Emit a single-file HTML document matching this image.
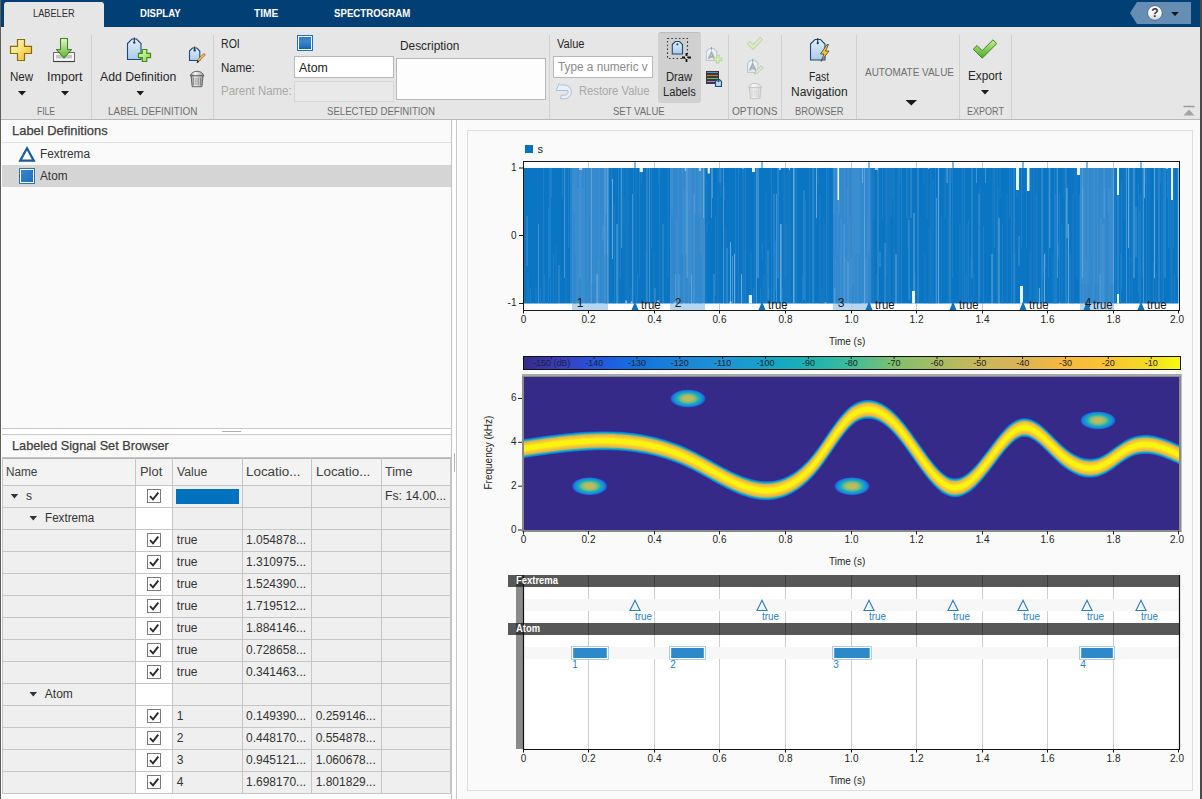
<!DOCTYPE html><html><head><meta charset="utf-8"><style>
*{box-sizing:border-box;margin:0;padding:0}
html,body{width:1202px;height:799px;overflow:hidden;background:#fafafa;font-family:"Liberation Sans",sans-serif;position:relative}
.a{position:absolute}
.t{position:absolute;white-space:nowrap;line-height:1}
svg{position:absolute;overflow:visible}
</style></head><body><div class="a" style="left:0px;top:0px;width:1202px;height:27px;background:#023f74"></div>
<div class="a" style="left:4px;top:2px;width:100px;height:26px;background:#e6e6e6;border-radius:3px 3px 0 0"></div>
<div class="t" style="left:33.30px;top:7.99px;font-size:11px;color:#2e2e2e;transform:scaleX(0.8393);transform-origin:0 0;">LABELER</div>
<div class="t" style="left:139.80px;top:7.99px;font-size:11px;color:#ffffff;font-weight:bold;transform:scaleX(0.8699);transform-origin:0 0;">DISPLAY</div>
<div class="t" style="left:254.00px;top:7.99px;font-size:11px;color:#ffffff;font-weight:bold;transform:scaleX(0.9208);transform-origin:0 0;">TIME</div>
<div class="t" style="left:333.80px;top:7.99px;font-size:11px;color:#ffffff;font-weight:bold;transform:scaleX(0.8781);transform-origin:0 0;">SPECTROGRAM</div>
<svg style="left:1130px;top:2px" width="62" height="23"><defs><linearGradient id="hq" x1="0" y1="0" x2="0" y2="1"><stop offset="0" stop-color="#ffffff"/><stop offset="0.6" stop-color="#f4f4f4"/><stop offset="1" stop-color="#c8ccd2"/></linearGradient></defs><path d="M7 0H61V22H7L0 11Z" fill="#668db3"/><circle cx="24.9" cy="11" r="7.3" fill="url(#hq)" stroke="#3a4a5a" stroke-width="0.6"/><text x="24.9" y="15.3" font-size="12" font-weight="bold" text-anchor="middle" fill="#2e3a48" font-family="Liberation Sans">?</text><path d="M41.2 9.9h7.6l-3.8 4.1z" fill="#111"/></svg>
<div class="a" style="left:0px;top:27px;width:1202px;height:93px;background:#e6e6e6;border-bottom:1px solid #b9b9b9"></div>
<div class="a" style="left:91px;top:35px;width:1px;height:84px;background:#d0d0d0"></div>
<div class="a" style="left:213px;top:35px;width:1px;height:84px;background:#d0d0d0"></div>
<div class="a" style="left:549px;top:35px;width:1px;height:84px;background:#d0d0d0"></div>
<div class="a" style="left:728px;top:35px;width:1px;height:84px;background:#d0d0d0"></div>
<div class="a" style="left:781px;top:35px;width:1px;height:84px;background:#d0d0d0"></div>
<div class="a" style="left:856px;top:35px;width:1px;height:84px;background:#d0d0d0"></div>
<div class="a" style="left:959px;top:35px;width:1px;height:84px;background:#d0d0d0"></div>
<div class="a" style="left:1011px;top:35px;width:1px;height:84px;background:#d0d0d0"></div>
<div class="t" style="left:37.00px;top:106.49px;font-size:11px;color:#6e6e6e;transform:scaleX(0.7742);transform-origin:0 0;">FILE</div>
<div class="t" style="left:107.80px;top:106.49px;font-size:11px;color:#6e6e6e;transform:scaleX(0.9015);transform-origin:0 0;">LABEL DEFINITION</div>
<div class="t" style="left:327.30px;top:106.49px;font-size:11px;color:#6e6e6e;transform:scaleX(0.8745);transform-origin:0 0;">SELECTED DEFINITION</div>
<div class="t" style="left:613.30px;top:106.49px;font-size:11px;color:#6e6e6e;transform:scaleX(0.8682);transform-origin:0 0;">SET VALUE</div>
<div class="t" style="left:732.00px;top:106.49px;font-size:11px;color:#6e6e6e;transform:scaleX(0.9186);transform-origin:0 0;">OPTIONS</div>
<div class="t" style="left:794.50px;top:106.49px;font-size:11px;color:#6e6e6e;transform:scaleX(0.8532);transform-origin:0 0;">BROWSER</div>
<div class="t" style="left:966.60px;top:106.49px;font-size:11px;color:#6e6e6e;transform:scaleX(0.8191);transform-origin:0 0;">EXPORT</div>
<div class="t" style="left:9.80px;top:70.54px;font-size:12px;color:#262626;transform:scaleX(0.9660);transform-origin:0 0;">New</div>
<div class="t" style="left:46.50px;top:70.54px;font-size:12px;color:#262626;transform:scaleX(1.0441);transform-origin:0 0;">Import</div>
<div class="t" style="left:100.10px;top:70.54px;font-size:12px;color:#262626;transform:scaleX(1.0227);transform-origin:0 0;">Add Definition</div>
<div class="t" style="left:220.60px;top:37.74px;font-size:12px;color:#262626;transform:scaleX(0.8815);transform-origin:0 0;">ROI</div>
<div class="t" style="left:220.60px;top:61.74px;font-size:12px;color:#262626;transform:scaleX(0.9563);transform-origin:0 0;">Name:</div>
<div class="t" style="left:220.60px;top:85.44px;font-size:12px;color:#a8a8a8;transform:scaleX(0.9545);transform-origin:0 0;">Parent Name:</div>
<div class="t" style="left:399.90px;top:39.94px;font-size:12px;color:#262626;transform:scaleX(0.9895);transform-origin:0 0;">Description</div>
<div class="t" style="left:556.60px;top:37.64px;font-size:12px;color:#262626;transform:scaleX(0.9229);transform-origin:0 0;">Value</div>
<div class="t" style="left:578.60px;top:85.14px;font-size:12px;color:#a8a8a8;transform:scaleX(0.9369);transform-origin:0 0;">Restore Value</div>
<div class="t" style="left:809.00px;top:70.64px;font-size:12px;color:#262626;transform:scaleX(0.8573);transform-origin:0 0;">Fast</div>
<div class="t" style="left:790.80px;top:86.44px;font-size:12px;color:#262626;transform:scaleX(0.9999);transform-origin:0 0;">Navigation</div>
<div class="t" style="left:865.00px;top:67.39px;font-size:11px;color:#6e6e6e;transform:scaleX(0.9040);transform-origin:0 0;">AUTOMATE VALUE</div>
<div class="t" style="left:967.80px;top:70.24px;font-size:12px;color:#262626;transform:scaleX(0.9806);transform-origin:0 0;">Export</div>
<svg style="left:0;top:0" width="1" height="1"><path d="M18 91H26L22.0 95.5Z" fill="#1a1a1a"/></svg>
<svg style="left:0;top:0" width="1" height="1"><path d="M61 91H69L65.0 95.5Z" fill="#1a1a1a"/></svg>
<svg style="left:0;top:0" width="1" height="1"><path d="M136.5 91H144L140.25 95.5Z" fill="#1a1a1a"/></svg>
<svg style="left:0;top:0" width="1" height="1"><path d="M981 90H989L985.0 94.5Z" fill="#1a1a1a"/></svg>
<svg style="left:0;top:0" width="1" height="1"><path d="M905.5 100H917L911.25 105.5Z" fill="#1a1a1a"/></svg>
<div class="a" style="left:296.9px;top:34.8px;width:16.2px;height:16.2px;background:#fff;border:1.3px solid #1f72c2"></div>
<div class="a" style="left:299.2px;top:37.1px;width:11.6px;height:11.6px;background:linear-gradient(180deg,#2a7cc6,#3c88ca 35%,#2a78c2 70%,#0d62b8)"></div>
<div class="a" style="left:294px;top:56px;width:100px;height:22px;background:#fff;border:1px solid #b8b8b8"></div>
<div class="t" style="left:299.00px;top:61.74px;font-size:12px;color:#222;transform:scaleX(1.0286);transform-origin:0 0;">Atom</div>
<div class="a" style="left:294px;top:80.5px;width:100px;height:21px;background:#e9e9e9;border:1px solid #d6d6d6"></div>
<div class="a" style="left:396px;top:58px;width:150px;height:42px;background:#fdfdfd;border:1px solid #b8b8b8"></div>
<div class="a" style="left:553px;top:56px;width:100px;height:22px;background:#fff;border:1px solid #b8b8b8"></div>
<div class="t" style="left:558.30px;top:61.44px;font-size:12px;color:#8a8a8a;transform:scaleX(0.9818);transform-origin:0 0;">Type a numeric v</div>
<div class="a" style="left:657.5px;top:31.7px;width:43.3px;height:71px;background:#d0d0d0;border-top:1px solid #bdbdbd;border-radius:3px"></div>
<div class="t" style="left:666.30px;top:70.64px;font-size:12px;color:#262626;transform:scaleX(0.9352);transform-origin:0 0;">Draw</div>
<div class="t" style="left:662.80px;top:86.44px;font-size:12px;color:#262626;transform:scaleX(0.9276);transform-origin:0 0;">Labels</div>
<svg style="left:0;top:0" width="1202" height="120" viewBox="0 0 1202 120"><defs>
<linearGradient id="plg" x1="0" y1="0" x2="1" y2="1"><stop offset="0" stop-color="#fffbd8"/><stop offset="0.5" stop-color="#f8e070"/><stop offset="1" stop-color="#e8b820"/></linearGradient>
<linearGradient id="grg" x1="0" y1="0" x2="0" y2="1"><stop offset="0" stop-color="#e6f5cf"/><stop offset="1" stop-color="#5fb52e"/></linearGradient>
<linearGradient id="gpg" x1="0" y1="0" x2="1" y2="1"><stop offset="0" stop-color="#e8fbc0"/><stop offset="1" stop-color="#8fd040"/></linearGradient>
<linearGradient id="tagg" x1="0" y1="0" x2="0" y2="1"><stop offset="0" stop-color="#e2eef8"/><stop offset="1" stop-color="#a9cbe8"/></linearGradient>
<linearGradient id="tagd" x1="0" y1="0" x2="0" y2="1"><stop offset="0" stop-color="#eef3f7"/><stop offset="1" stop-color="#dfe8f0"/></linearGradient>
<linearGradient id="trg" x1="0" y1="0" x2="1" y2="0"><stop offset="0" stop-color="#8c8c8c"/><stop offset="0.35" stop-color="#f8f8f8"/><stop offset="1" stop-color="#9a9a9a"/></linearGradient>
<linearGradient id="trgd" x1="0" y1="0" x2="1" y2="0"><stop offset="0" stop-color="#d8d8d8"/><stop offset="0.35" stop-color="#f6f6f6"/><stop offset="1" stop-color="#d8d8d8"/></linearGradient>
<linearGradient id="ckg" x1="0" y1="0" x2="0" y2="1"><stop offset="0" stop-color="#c8ee90"/><stop offset="1" stop-color="#4fa82a"/></linearGradient>
</defs><path d="M17.5 39.5H24.5V46.3H31.5V53.5H24.5V60.5H17.5V53.5H10.5V46.3H17.5Z" fill="url(#plg)" stroke="#8c6a12" stroke-width="1.2" stroke-linejoin="miter"/><rect x="53.5" y="52.5" width="21" height="9" fill="#fafafa" stroke="#6a6a6a" stroke-width="1"/><rect x="56" y="55" width="16" height="3.5" fill="#c4c4c4"/><path d="M53.5 61.5H74.5" stroke="#444" stroke-width="1.2"/><path d="M60.5 38.5H67.5V49.5H71.5L64 58L56.5 49.5H60.5Z" fill="url(#grg)" stroke="#3a8a20" stroke-width="1.1" stroke-linejoin="round"/><path d="M127.5 43.5L132.0 39H136.5L141 43.5V59.5H127.5Z" fill="url(#tagg)" stroke="#1e4a7a" stroke-width="1.1" stroke-linejoin="miter"/><circle cx="134.25" cy="42.6" r="1.2" fill="#1e4a7a"/><path d="M134.25 37.5V42.6" stroke="#222" stroke-width="1"/><path d="M142.3 49.5H146.8V53.3H150.5V57.6H146.8V61.5H142.3V57.6H138.5V53.3H142.3Z" fill="url(#gpg)" stroke="#3e8e1e" stroke-width="1.2" stroke-linejoin="miter"/><path d="M189.5 51L192.5 48H196.8L199.8 51V60.5H189.5Z" fill="url(#tagg)" stroke="#1e4a7a" stroke-width="1.1" stroke-linejoin="miter"/><circle cx="194.65" cy="50.4" r="1.2" fill="#1e4a7a"/><path d="M194.65 46.5V50.4" stroke="#222" stroke-width="1"/><path d="M197 62.5L198.2 59L203.5 53.8L205 55.3L199.7 60.5Z" fill="#f0c040" stroke="#6a5020" stroke-width="0.6"/><path d="M203.5 53.8L204.4 52.9L205.9 54.4L205 55.3Z" fill="#e870a0"/><path d="M196.6 63L197.5 60.3L199.3 62Z" fill="#222"/><path d="M190.2 75.8Q191.905 71.3 197.05 71.3Q202.195 71.3 203.9 75.8Z" fill="url(#trg)" stroke="#5a5a5a" stroke-width="0.9"/><path d="M191.0 75.8L192.2 86.7H201.9L203.1 75.8Z" fill="url(#trg)" stroke="#5a5a5a" stroke-width="0.9"/><path d="M193.7 77.6V85.2" stroke="#5a5a5a" stroke-width="0.8" opacity="0.8"/><path d="M195.93333333333334 77.6V85.2" stroke="#5a5a5a" stroke-width="0.8" opacity="0.8"/><path d="M198.16666666666666 77.6V85.2" stroke="#5a5a5a" stroke-width="0.8" opacity="0.8"/><path d="M200.4 77.6V85.2" stroke="#5a5a5a" stroke-width="0.8" opacity="0.8"/><path d="M556.2 90.5L559 83.8L560.6 85H564.5A6.9 6.9 0 0 1 564.5 98.8H560.5L561.2 95.3H564.5A3.6 3.6 0 0 0 567.9 90.5Z" fill="#e8f0f8" stroke="#a6bcd2" stroke-width="0.9" stroke-linejoin="round"/><rect x="667.5" y="38.5" width="20" height="20" fill="none" stroke="#3a3a3a" stroke-width="1.1" stroke-dasharray="1.6 2.2"/><path d="M672.3 44.5L675.3 41.5H679.5L682.5 44.5V54H672.3Z" fill="url(#tagg)" stroke="#1e4a7a" stroke-width="1.1" stroke-linejoin="miter"/><circle cx="677.4" cy="44.3" r="1.1" fill="#1e4a7a"/><path d="M686.5 53V56M686.5 59V62M682 57.5H685M688 57.5H691" stroke="#111" stroke-width="1.8"/><path d="M706.3 51.5L709.3 48.5H713.8L716.8 51.5V60.5H706.3Z" fill="url(#tagd)" stroke="#b7c9da" stroke-width="1.1" stroke-linejoin="miter"/><path d="M711.5 47V50" stroke="#a0a0a0" stroke-width="1"/><path d="M708.575 59L711.5 52.5L714.425 59M709.745 56.725H713.255" fill="none" stroke="#adadad" stroke-width="1.8"/><path d="M716.6 55.3H719.2V58H721.8V60.6H719.2V63H716.6V60.6H714V58H716.6Z" fill="#d5efb5" stroke="#bcd8a8" stroke-width="1.2" stroke-linejoin="miter"/><rect x="706" y="71" width="13" height="13" fill="#3a3a3a"/><path d="M707 72.5H718" stroke-width="1" stroke="#3a9ae0"/><path d="M707 75.5H718" stroke="#f06a30" stroke-width="1"/><path d="M707 78.5H718" stroke="#6cc040" stroke-width="1"/><path d="M707 81.5H717" stroke="#c070f0" stroke-width="1"/><path d="M715.5 81.5L717.5 79.5H719.5L721.5 81.5V86.5H715.5Z" fill="url(#tagg)" stroke="#1e4a7a" stroke-width="1.1" stroke-linejoin="miter"/><circle cx="718.5" cy="81.1" r="1.2" fill="#1e4a7a"/><path d="M718.5 78.0V81.1" stroke="#1e4a7a" stroke-width="1"/><path d="M747.2 43.9L749.7 41.2L753 44.4L760.2 37.3L762.7 39.8L753 49.4Z" fill="#d6eebb" stroke="#bdbdb0" stroke-width="0.8" stroke-linejoin="round"/><path d="M747.5 63.3L750.5 60.3H755L758 63.3V72.5H747.5Z" fill="url(#tagd)" stroke="#b7c9da" stroke-width="1.1" stroke-linejoin="miter"/><path d="M752.7 58.8V62" stroke="#a0a0a0" stroke-width="1"/><path d="M749.7750000000001 70.5L752.7 64.0L755.625 70.5M750.945 68.225H754.455" fill="none" stroke="#adadad" stroke-width="1.8"/><path d="M754.5 74.2L755.6 71.3L761.3 65.8L763.2 67.7L757.5 73.2Z" fill="#dcebc8" stroke="#b8b8b0" stroke-width="0.7"/><path d="M748.5 87.8Q750.145 83.3 755.15 83.3Q760.155 83.3 761.8 87.8Z" fill="url(#trgd)" stroke="#c2c2c2" stroke-width="0.9"/><path d="M749.3 87.8L750.5 98.6H759.8L761.0 87.8Z" fill="url(#trgd)" stroke="#c2c2c2" stroke-width="0.9"/><path d="M752.0 89.6V97.1" stroke="#c2c2c2" stroke-width="0.8" opacity="0.8"/><path d="M754.1 89.6V97.1" stroke="#c2c2c2" stroke-width="0.8" opacity="0.8"/><path d="M756.1999999999999 89.6V97.1" stroke="#c2c2c2" stroke-width="0.8" opacity="0.8"/><path d="M758.3 89.6V97.1" stroke="#c2c2c2" stroke-width="0.8" opacity="0.8"/><path d="M810.5 44.0L815.0 39.5H820.5L825 44.0V60H810.5Z" fill="url(#tagg)" stroke="#1e4a7a" stroke-width="1.1" stroke-linejoin="miter"/><circle cx="817.75" cy="43.1" r="1.2" fill="#1e4a7a"/><path d="M817.75 38.0V43.1" stroke="#222" stroke-width="1"/><path d="M827 44.5L820.5 54H824L821 61.5L829 51H825.5L828.5 44.5Z" fill="#f5c52a" stroke="#444" stroke-width="0.8" stroke-linejoin="round"/><path d="M973.2 49.2L977 45.4L982.2 50.6L993 39.8L996.8 43.6L982.2 58.2Z" fill="url(#ckg)" stroke="#3c8a22" stroke-width="1" stroke-linejoin="round"/><path d="M1183.5 106.5H1194.5" stroke="#9a9a9a" stroke-width="1.5"/><path d="M1183.5 115.5H1194.5L1189 109.5Z" fill="#a4a4a4"/></svg>
<div class="a" style="left:0px;top:120px;width:451px;height:679px;background:#fafafa"></div>
<div class="a" style="left:451px;top:120px;width:1px;height:679px;background:#c2c2c2"></div>
<div class="a" style="left:452px;top:120px;width:4px;height:679px;background:#ffffff"></div>
<div class="a" style="left:456px;top:120px;width:1px;height:679px;background:#c6c6c6"></div>
<div class="a" style="left:0px;top:0px;width:1px;height:799px;background:#5e5e5e"></div>
<div class="a" style="left:1px;top:120px;width:1px;height:679px;background:#ffffff"></div>
<div class="t" style="left:11.50px;top:123.70px;font-size:13px;color:#3e3e3e;transform:scaleX(0.9953);transform-origin:0 0;-webkit-text-stroke:0.25px #3e3e3e;">Label Definitions</div>
<div class="a" style="left:2px;top:142px;width:449px;height:1px;background:#dedede"></div>
<svg style="left:0;top:0" width="1" height="1"><path d="M27 148.2L20.2 160.6H33.8Z" fill="none" stroke="#1c5c9a" stroke-width="2.2" stroke-linejoin="miter"/></svg>
<div class="t" style="left:40.20px;top:147.64px;font-size:12px;color:#333333;transform:scaleX(0.9887);transform-origin:0 0;">Fextrema</div>
<div class="a" style="left:2px;top:165px;width:449px;height:22px;background:#d5d5d5"></div>
<div class="a" style="left:19px;top:168px;width:16px;height:16px;background:#fff;border:1.3px solid #2a73c0"></div>
<div class="a" style="left:20.8px;top:169.8px;width:12.4px;height:12.6px;background:linear-gradient(135deg,#3d8ad2,#1f6cb8)"></div>
<div class="t" style="left:40.20px;top:169.54px;font-size:12px;color:#333333;transform:scaleX(0.9821);transform-origin:0 0;">Atom</div>
<div class="a" style="left:2px;top:428px;width:449px;height:1px;background:#c8c8c8"></div>
<div class="a" style="left:2px;top:434px;width:449px;height:1px;background:#c8c8c8"></div>
<div class="a" style="left:2px;top:429px;width:449px;height:5px;background:#ffffff"></div>
<div class="a" style="left:222px;top:431px;width:19px;height:1px;background:#b0b0b0"></div>
<div class="t" style="left:11.50px;top:438.90px;font-size:13px;color:#3e3e3e;transform:scaleX(0.9777);transform-origin:0 0;-webkit-text-stroke:0.25px #3e3e3e;">Labeled Signal Set Browser</div>
<div class="a" style="left:2px;top:457px;width:449px;height:1px;background:#c4c4c4"></div>
<div class="a" style="left:2px;top:458px;width:449px;height:27px;background:#f3f3f3"></div>
<div class="a" style="left:2px;top:458px;width:449px;height:1px;background:#b4b4b4"></div>
<div class="a" style="left:2px;top:486px;width:133px;height:21px;background:#efefef"></div>
<div class="a" style="left:136px;top:486px;width:36px;height:21px;background:#ffffff"></div>
<div class="a" style="left:173px;top:486px;width:277px;height:21px;background:#efefef"></div>
<div class="a" style="left:2px;top:508px;width:133px;height:21px;background:#efefef"></div>
<div class="a" style="left:136px;top:508px;width:36px;height:21px;background:#ffffff"></div>
<div class="a" style="left:173px;top:508px;width:277px;height:21px;background:#efefef"></div>
<div class="a" style="left:2px;top:530px;width:133px;height:21px;background:#efefef"></div>
<div class="a" style="left:136px;top:530px;width:36px;height:21px;background:#ffffff"></div>
<div class="a" style="left:173px;top:530px;width:277px;height:21px;background:#efefef"></div>
<div class="a" style="left:2px;top:552px;width:133px;height:21px;background:#efefef"></div>
<div class="a" style="left:136px;top:552px;width:36px;height:21px;background:#ffffff"></div>
<div class="a" style="left:173px;top:552px;width:277px;height:21px;background:#efefef"></div>
<div class="a" style="left:2px;top:574px;width:133px;height:21px;background:#efefef"></div>
<div class="a" style="left:136px;top:574px;width:36px;height:21px;background:#ffffff"></div>
<div class="a" style="left:173px;top:574px;width:277px;height:21px;background:#efefef"></div>
<div class="a" style="left:2px;top:596px;width:133px;height:21px;background:#efefef"></div>
<div class="a" style="left:136px;top:596px;width:36px;height:21px;background:#ffffff"></div>
<div class="a" style="left:173px;top:596px;width:277px;height:21px;background:#efefef"></div>
<div class="a" style="left:2px;top:618px;width:133px;height:21px;background:#efefef"></div>
<div class="a" style="left:136px;top:618px;width:36px;height:21px;background:#ffffff"></div>
<div class="a" style="left:173px;top:618px;width:277px;height:21px;background:#efefef"></div>
<div class="a" style="left:2px;top:640px;width:133px;height:21px;background:#efefef"></div>
<div class="a" style="left:136px;top:640px;width:36px;height:21px;background:#ffffff"></div>
<div class="a" style="left:173px;top:640px;width:277px;height:21px;background:#efefef"></div>
<div class="a" style="left:2px;top:662px;width:133px;height:21px;background:#efefef"></div>
<div class="a" style="left:136px;top:662px;width:36px;height:21px;background:#ffffff"></div>
<div class="a" style="left:173px;top:662px;width:277px;height:21px;background:#efefef"></div>
<div class="a" style="left:2px;top:684px;width:133px;height:21px;background:#efefef"></div>
<div class="a" style="left:136px;top:684px;width:36px;height:21px;background:#ffffff"></div>
<div class="a" style="left:173px;top:684px;width:277px;height:21px;background:#efefef"></div>
<div class="a" style="left:2px;top:706px;width:133px;height:21px;background:#efefef"></div>
<div class="a" style="left:136px;top:706px;width:36px;height:21px;background:#ffffff"></div>
<div class="a" style="left:173px;top:706px;width:277px;height:21px;background:#efefef"></div>
<div class="a" style="left:2px;top:728px;width:133px;height:21px;background:#efefef"></div>
<div class="a" style="left:136px;top:728px;width:36px;height:21px;background:#ffffff"></div>
<div class="a" style="left:173px;top:728px;width:277px;height:21px;background:#efefef"></div>
<div class="a" style="left:2px;top:750px;width:133px;height:21px;background:#efefef"></div>
<div class="a" style="left:136px;top:750px;width:36px;height:21px;background:#ffffff"></div>
<div class="a" style="left:173px;top:750px;width:277px;height:21px;background:#efefef"></div>
<div class="a" style="left:2px;top:772px;width:133px;height:21px;background:#efefef"></div>
<div class="a" style="left:136px;top:772px;width:36px;height:21px;background:#ffffff"></div>
<div class="a" style="left:173px;top:772px;width:277px;height:21px;background:#efefef"></div>
<div class="a" style="left:2px;top:485px;width:449px;height:1px;background:#c6c6c6"></div>
<div class="a" style="left:2px;top:507px;width:449px;height:1px;background:#c6c6c6"></div>
<div class="a" style="left:2px;top:529px;width:449px;height:1px;background:#c6c6c6"></div>
<div class="a" style="left:2px;top:551px;width:449px;height:1px;background:#c6c6c6"></div>
<div class="a" style="left:2px;top:573px;width:449px;height:1px;background:#c6c6c6"></div>
<div class="a" style="left:2px;top:595px;width:449px;height:1px;background:#c6c6c6"></div>
<div class="a" style="left:2px;top:617px;width:449px;height:1px;background:#c6c6c6"></div>
<div class="a" style="left:2px;top:639px;width:449px;height:1px;background:#c6c6c6"></div>
<div class="a" style="left:2px;top:661px;width:449px;height:1px;background:#c6c6c6"></div>
<div class="a" style="left:2px;top:683px;width:449px;height:1px;background:#c6c6c6"></div>
<div class="a" style="left:2px;top:705px;width:449px;height:1px;background:#c6c6c6"></div>
<div class="a" style="left:2px;top:727px;width:449px;height:1px;background:#c6c6c6"></div>
<div class="a" style="left:2px;top:749px;width:449px;height:1px;background:#c6c6c6"></div>
<div class="a" style="left:2px;top:771px;width:449px;height:1px;background:#c6c6c6"></div>
<div class="a" style="left:2px;top:793px;width:449px;height:1px;background:#c6c6c6"></div>
<div class="a" style="left:2px;top:458px;width:1px;height:335px;background:#c6c6c6"></div>
<div class="a" style="left:135px;top:458px;width:1px;height:335px;background:#c6c6c6"></div>
<div class="a" style="left:172px;top:458px;width:1px;height:335px;background:#c6c6c6"></div>
<div class="a" style="left:242px;top:458px;width:1px;height:335px;background:#c6c6c6"></div>
<div class="a" style="left:311px;top:458px;width:1px;height:335px;background:#c6c6c6"></div>
<div class="a" style="left:381px;top:458px;width:1px;height:335px;background:#c6c6c6"></div>
<div class="a" style="left:450px;top:458px;width:1px;height:335px;background:#c6c6c6"></div>
<div class="a" style="left:2px;top:794px;width:449px;height:5px;background:#ffffff"></div>
<div class="t" style="left:5.70px;top:466.14px;font-size:12px;color:#404040;transform:scaleX(0.9808);transform-origin:0 0;">Name</div>
<div class="t" style="left:139.70px;top:466.14px;font-size:12px;color:#404040;transform:scaleX(1.0739);transform-origin:0 0;">Plot</div>
<div class="t" style="left:176.80px;top:466.14px;font-size:12px;color:#404040;transform:scaleX(1.0135);transform-origin:0 0;">Value</div>
<div class="t" style="left:246.00px;top:466.14px;font-size:12px;color:#404040;transform:scaleX(1.1177);transform-origin:0 0;">Locatio...</div>
<div class="t" style="left:315.70px;top:466.14px;font-size:12px;color:#404040;transform:scaleX(1.1156);transform-origin:0 0;">Locatio...</div>
<div class="t" style="left:384.60px;top:466.14px;font-size:12px;color:#404040;transform:scaleX(1.0521);transform-origin:0 0;">Time</div>
<svg style="left:0;top:0" width="1" height="1"><path d="M10.7 494H18.2L14.45 498.5Z" fill="#333"/></svg>
<div class="t" style="left:26.00px;top:490.24px;font-size:12px;color:#333333;">s</div>
<div class="a" style="left:147px;top:489px;width:14px;height:14px;background:#fff;border:1px solid #7a7a7a"></div>
<svg style="left:0;top:0" width="1" height="1"><path d="M150 496.2L153 499.3L158.3 492.6" fill="none" stroke="#2a2a2a" stroke-width="1.9"/></svg>
<div class="a" style="left:176px;top:489px;width:63px;height:15px;background:#0072bd"></div>
<div class="t" style="left:384.60px;top:490.24px;font-size:12px;color:#333333;transform:scaleX(1.0203);transform-origin:0 0;">Fs: 14.00...</div>
<svg style="left:0;top:0" width="1" height="1"><path d="M29.5 516H37.0L33.25 520.5Z" fill="#333"/></svg>
<div class="t" style="left:44.80px;top:512.24px;font-size:12px;color:#333333;transform:scaleX(0.9729);transform-origin:0 0;">Fextrema</div>
<div class="a" style="left:147px;top:533px;width:14px;height:14px;background:#fff;border:1px solid #7a7a7a"></div>
<svg style="left:0;top:0" width="1" height="1"><path d="M150 540.2L153 543.3L158.3 536.6" fill="none" stroke="#2a2a2a" stroke-width="1.9"/></svg>
<div class="t" style="left:176.80px;top:534.24px;font-size:12px;color:#333333;">true</div>
<div class="t" style="left:246.00px;top:534.24px;font-size:12px;color:#333333;">1.054878...</div>
<div class="a" style="left:147px;top:555px;width:14px;height:14px;background:#fff;border:1px solid #7a7a7a"></div>
<svg style="left:0;top:0" width="1" height="1"><path d="M150 562.2L153 565.3L158.3 558.6" fill="none" stroke="#2a2a2a" stroke-width="1.9"/></svg>
<div class="t" style="left:176.80px;top:556.24px;font-size:12px;color:#333333;">true</div>
<div class="t" style="left:246.00px;top:556.24px;font-size:12px;color:#333333;">1.310975...</div>
<div class="a" style="left:147px;top:577px;width:14px;height:14px;background:#fff;border:1px solid #7a7a7a"></div>
<svg style="left:0;top:0" width="1" height="1"><path d="M150 584.2L153 587.3L158.3 580.6" fill="none" stroke="#2a2a2a" stroke-width="1.9"/></svg>
<div class="t" style="left:176.80px;top:578.24px;font-size:12px;color:#333333;">true</div>
<div class="t" style="left:246.00px;top:578.24px;font-size:12px;color:#333333;">1.524390...</div>
<div class="a" style="left:147px;top:599px;width:14px;height:14px;background:#fff;border:1px solid #7a7a7a"></div>
<svg style="left:0;top:0" width="1" height="1"><path d="M150 606.2L153 609.3L158.3 602.6" fill="none" stroke="#2a2a2a" stroke-width="1.9"/></svg>
<div class="t" style="left:176.80px;top:600.24px;font-size:12px;color:#333333;">true</div>
<div class="t" style="left:246.00px;top:600.24px;font-size:12px;color:#333333;">1.719512...</div>
<div class="a" style="left:147px;top:621px;width:14px;height:14px;background:#fff;border:1px solid #7a7a7a"></div>
<svg style="left:0;top:0" width="1" height="1"><path d="M150 628.2L153 631.3L158.3 624.6" fill="none" stroke="#2a2a2a" stroke-width="1.9"/></svg>
<div class="t" style="left:176.80px;top:622.24px;font-size:12px;color:#333333;">true</div>
<div class="t" style="left:246.00px;top:622.24px;font-size:12px;color:#333333;">1.884146...</div>
<div class="a" style="left:147px;top:643px;width:14px;height:14px;background:#fff;border:1px solid #7a7a7a"></div>
<svg style="left:0;top:0" width="1" height="1"><path d="M150 650.2L153 653.3L158.3 646.6" fill="none" stroke="#2a2a2a" stroke-width="1.9"/></svg>
<div class="t" style="left:176.80px;top:644.24px;font-size:12px;color:#333333;">true</div>
<div class="t" style="left:246.00px;top:644.24px;font-size:12px;color:#333333;">0.728658...</div>
<div class="a" style="left:147px;top:665px;width:14px;height:14px;background:#fff;border:1px solid #7a7a7a"></div>
<svg style="left:0;top:0" width="1" height="1"><path d="M150 672.2L153 675.3L158.3 668.6" fill="none" stroke="#2a2a2a" stroke-width="1.9"/></svg>
<div class="t" style="left:176.80px;top:666.24px;font-size:12px;color:#333333;">true</div>
<div class="t" style="left:246.00px;top:666.24px;font-size:12px;color:#333333;">0.341463...</div>
<svg style="left:0;top:0" width="1" height="1"><path d="M29.5 692H37.0L33.25 696.5Z" fill="#333"/></svg>
<div class="t" style="left:44.80px;top:688.24px;font-size:12px;color:#333333;">Atom</div>
<div class="a" style="left:147px;top:709px;width:14px;height:14px;background:#fff;border:1px solid #7a7a7a"></div>
<svg style="left:0;top:0" width="1" height="1"><path d="M150 716.2L153 719.3L158.3 712.6" fill="none" stroke="#2a2a2a" stroke-width="1.9"/></svg>
<div class="t" style="left:176.80px;top:710.24px;font-size:12px;color:#333333;">1</div>
<div class="t" style="left:246.00px;top:710.24px;font-size:12px;color:#333333;">0.149390...</div>
<div class="t" style="left:315.70px;top:710.24px;font-size:12px;color:#333333;">0.259146...</div>
<div class="a" style="left:147px;top:731px;width:14px;height:14px;background:#fff;border:1px solid #7a7a7a"></div>
<svg style="left:0;top:0" width="1" height="1"><path d="M150 738.2L153 741.3L158.3 734.6" fill="none" stroke="#2a2a2a" stroke-width="1.9"/></svg>
<div class="t" style="left:176.80px;top:732.24px;font-size:12px;color:#333333;">2</div>
<div class="t" style="left:246.00px;top:732.24px;font-size:12px;color:#333333;">0.448170...</div>
<div class="t" style="left:315.70px;top:732.24px;font-size:12px;color:#333333;">0.554878...</div>
<div class="a" style="left:147px;top:753px;width:14px;height:14px;background:#fff;border:1px solid #7a7a7a"></div>
<svg style="left:0;top:0" width="1" height="1"><path d="M150 760.2L153 763.3L158.3 756.6" fill="none" stroke="#2a2a2a" stroke-width="1.9"/></svg>
<div class="t" style="left:176.80px;top:754.24px;font-size:12px;color:#333333;">3</div>
<div class="t" style="left:246.00px;top:754.24px;font-size:12px;color:#333333;">0.945121...</div>
<div class="t" style="left:315.70px;top:754.24px;font-size:12px;color:#333333;">1.060678...</div>
<div class="a" style="left:147px;top:775px;width:14px;height:14px;background:#fff;border:1px solid #7a7a7a"></div>
<svg style="left:0;top:0" width="1" height="1"><path d="M150 782.2L153 785.3L158.3 778.6" fill="none" stroke="#2a2a2a" stroke-width="1.9"/></svg>
<div class="t" style="left:176.80px;top:776.24px;font-size:12px;color:#333333;">4</div>
<div class="t" style="left:246.00px;top:776.24px;font-size:12px;color:#333333;">1.698170...</div>
<div class="t" style="left:315.70px;top:776.24px;font-size:12px;color:#333333;">1.801829...</div>
<div class="a" style="left:457px;top:120px;width:745px;height:679px;background:#fafafa"></div>
<div class="a" style="left:467px;top:130px;width:726px;height:661px;border:1px solid #dedede;background:#fafafa"></div>
<div class="a" style="left:1200px;top:0px;width:2px;height:799px;background:#4a4a4a"></div>
<div class="a" style="left:453.5px;top:453px;width:1.5px;height:19px;background:#b4b4b4"></div>
<svg style="left:0;top:0" width="1202" height="799" viewBox="0 0 1202 799"><rect x="523" y="161" width="656" height="149" fill="#ffffff"/><path d="M588.5 161V310" stroke="#dedede" stroke-width="1"/><path d="M654.5 161V310" stroke="#dedede" stroke-width="1"/><path d="M719.5 161V310" stroke="#dedede" stroke-width="1"/><path d="M785.5 161V310" stroke="#dedede" stroke-width="1"/><path d="M851.5 161V310" stroke="#dedede" stroke-width="1"/><path d="M916.5 161V310" stroke="#dedede" stroke-width="1"/><path d="M982.5 161V310" stroke="#dedede" stroke-width="1"/><path d="M1047.5 161V310" stroke="#dedede" stroke-width="1"/><path d="M1113.5 161V310" stroke="#dedede" stroke-width="1"/><rect x="523.5" y="168" width="655" height="135.5" fill="#0a75c2"/><rect x="571.99992" y="168" width="35.99996800000008" height="135.5" fill="#3a8ed0"/><rect x="571.99992" y="303.5" width="35.99996800000008" height="6.5" fill="#b7d6ef"/><rect x="669.99976" y="168" width="35.000224" height="135.5" fill="#3a8ed0"/><rect x="669.99976" y="303.5" width="35.000224" height="6.5" fill="#b7d6ef"/><rect x="832.999688" y="168" width="37.90269599999999" height="135.5" fill="#3a8ed0"/><rect x="832.999688" y="303.5" width="37.90269599999999" height="6.5" fill="#b7d6ef"/><rect x="1079.9997600000002" y="168" width="34.000151999999844" height="135.5" fill="#3a8ed0"/><rect x="1079.9997600000002" y="303.5" width="34.000151999999844" height="6.5" fill="#b7d6ef"/><path d="M528.0 274V304M530.5 288V304M536.0 288V304M540.5 288V304M543.5 168V304M544.5 274V304M548.5 208V304M549.5 168V278M550.5 168V304M551.5 168V198M553.5 254V304M556.0 245V304M562.5 168V198M566.0 168V303M568.5 168V248M573.5 186V236M574.5 224V304M577.0 224V304M579.0 274V304M581.5 228V304M582.5 168V198M586.0 168V183M587.0 168V183M589.5 168V218M598.5 176V226M611.5 168V183M614.5 205V304M618.5 168V304M620.5 168V278M623.0 168V248M624.0 196V226M626.0 168V303M628.0 168V304M631.0 288V304M633.5 168V304M636.0 168V303M637.5 274V304M639.5 168V278M641.5 168V183M646.0 254V304M651.5 168V248M654.0 254V304M658.5 168V183M659.5 168V303M668.0 168V278M670.5 168V248M673.0 194V304M676.5 288V304M682.0 168V278M686.0 168V303M688.0 168V183M689.5 168V304M696.0 168V183M705.0 168V218M706.0 224V304M707.0 181V231M715.5 216V296M718.0 168V303M721.0 168V198M724.5 186V201M726.0 228V304M735.5 168V303M738.5 168V303M743.0 168V304M744.0 168V303M745.5 168V304M751.0 254V304M753.5 288V304M755.0 168V304M760.5 288V304M762.5 243V258M764.0 274V304M766.0 192V302M769.0 288V304M770.0 168V183M771.5 168V303M775.5 241V291M782.5 288V304M784.0 168V303M785.0 168V278M786.0 224V304M788.0 168V303M790.0 168V304M796.5 168V303M802.5 274V304M805.5 200V304M809.5 168V303M814.0 168V304M818.0 168V183M820.0 194V304M822.0 288V304M824.0 224V304M826.5 168V304M828.0 168V304M835.5 260V304M836.5 168V304M838.5 168V304M839.5 168V303M840.5 243V293M842.5 168V183M850.5 216V304M852.0 274V304M853.0 248V304M855.5 194V304M856.5 259V274M857.5 168V304M865.5 168V304M868.0 168V278M869.0 274V304M870.0 168V304M871.5 168V303M873.0 168V304M874.0 168V218M876.0 274V304M882.5 168V218M886.0 168V278M887.0 168V303M889.0 168V304M890.0 254V304M891.0 168V218M893.0 168V198M894.0 168V304M898.0 168V303M899.0 168V304M900.0 168V183M901.5 168V303M906.5 168V218M908.0 168V248M910.0 288V304M915.0 274V304M924.0 168V183M925.0 254V304M927.0 168V218M929.0 228V304M931.0 168V304M933.0 180V304M935.5 168V304M941.0 216V304M945.0 168V218M948.0 168V303M951.0 168V183M952.5 168V278M960.0 224V304M962.5 168V304M964.5 168V303M966.0 274V304M967.0 224V304M968.5 220V304M971.0 258V304M974.0 274V304M980.0 187V297M983.5 226V304M993.0 168V303M994.5 168V248M997.0 168V303M998.0 186V304M1000.0 168V198M1002.5 224V304M1007.0 194V304M1009.5 168V218M1011.5 168V303M1015.0 254V304M1017.0 168V198M1021.5 168V248M1026.5 168V248M1030.0 254V304M1031.0 168V303M1034.0 168V303M1036.0 194V304M1037.0 168V303M1038.0 288V304M1043.0 168V278M1045.5 252V267M1048.5 168V278M1050.5 168V248M1053.0 254V304M1054.5 168V304M1055.5 194V304M1056.5 168V304M1058.5 243V258M1059.5 194V304M1062.0 224V304M1064.0 168V198M1070.5 254V304M1073.0 194V304M1075.0 168V198M1077.0 168V278M1079.5 194V304M1081.0 168V198M1083.5 168V303M1086.0 288V304M1092.5 168V278M1093.5 254V304M1095.0 168V248M1097.5 168V303M1106.0 168V278M1108.5 168V303M1115.5 168V303M1120.5 254V304M1121.5 181V291M1125.0 168V218M1129.5 168V303M1132.0 168V303M1138.5 183V293M1139.5 211V304M1140.5 194V304M1142.5 168V278M1145.5 168V183M1146.5 168V304M1149.0 168V304M1153.5 262V304M1156.0 274V304M1157.0 169V199M1160.5 168V183M1162.0 168V304M1163.5 168V304M1167.5 168V198M1168.5 168V248M1170.0 168V248M1171.0 168V303M1172.0 168V304M1173.5 168V248M1174.5 274V304M1177.5 168V278" stroke="#3d92d6" stroke-width="0.8" opacity="0.45"/><path d="M527.0 216V266M538.5 224V304M559.0 265V304M564.5 168V278M571.0 168V303M580.0 168V278M591.5 168V304M603.0 225V240M605.0 168V304M621.5 168V248M632.5 194V304M647.0 168V304M649.5 168V304M655.0 288V304M663.0 224V304M675.5 274V304M679.0 274V304M691.5 274V304M694.0 194V304M711.5 168V218M712.5 168V198M714.0 274V304M720.0 168V183M723.5 168V304M727.0 248V304M732.5 256V304M756.5 168V304M768.0 250V300M774.0 194V304M776.5 194V304M778.0 168V278M781.5 224V304M794.5 168V304M804.0 190V300M813.0 168V304M834.5 288V304M844.0 224V304M848.0 262V304M864.5 168V303M878.0 168V303M880.0 252V267M885.0 243V304M909.0 220V300M911.0 168V218M918.0 168V303M936.5 198V304M950.0 168V303M972.0 168V278M976.5 168V183M979.0 194V304M985.5 168V183M1014.0 168V304M1019.0 236V266M1042.0 168V304M1049.5 168V248M1057.5 168V278M1066.0 168V303M1082.5 168V278M1100.0 274V304M1103.0 224V304M1104.0 168V218M1113.5 168V303M1118.0 168V303M1126.5 168V303M1136.0 207V257M1143.5 168V304M1159.0 168V304M1165.0 168V278" stroke="#8cc0ea" stroke-width="0.7" opacity="0.6"/><path d="M597.0 274V304M608.0 168V303M612.5 179V259M617.0 224V304M687.0 168V278M703.5 168V218M730.5 242V304M734.5 254V304M741.5 274V304M758.0 168V278M780.5 224V304M793.5 168V303M816.5 168V218M862.5 168V183M896.0 254V304M914.0 213V304M938.5 168V304M947.0 168V183M992.0 254V304M999.0 218V304M1039.5 288V304M1044.5 254V304M1067.0 188V238M1068.5 224V304M1128.5 168V248M1134.0 168V278M1144.5 168V198M1154.5 168V278" stroke="#e4f0fa" stroke-width="0.6" opacity="0.7"/><path d="M574.0 214V304M575.0 254V304M578.0 168V188M580.0 168V304M583.0 168V188M586.0 168V304M589.0 168V304M592.0 284V304M593.0 168V303M594.0 284V304M596.0 168V303M598.0 168V258M601.0 168V303M603.0 168V303M605.0 254V304M606.0 214V304M607.0 254V304M672.0 214V304M674.0 168V303M675.0 168V303M677.0 168V218M680.0 168V304M681.0 168V304M682.0 254V304M684.0 168V188M686.0 254V304M687.0 168V303M690.0 284V304M693.0 168V303M695.0 214V304M697.0 168V303M699.0 214V304M701.0 254V304M703.0 168V218M706.0 168V188M834.0 214V304M836.0 168V258M837.0 254V304M839.0 214V304M841.0 168V218M843.0 168V303M846.0 168V258M847.0 168V188M850.0 168V218M851.0 168V258M853.0 284V304M856.0 254V304M859.0 254V304M861.0 168V304M863.0 168V303M866.0 168V258M867.0 168V218M869.0 254V304M871.0 168V303M1082.0 284V304M1083.0 168V188M1085.0 284V304M1086.0 168V258M1088.0 284V304M1090.0 168V303M1092.0 168V304M1095.0 284V304M1096.0 168V303M1098.0 284V304M1099.0 168V304M1101.0 168V218M1103.0 168V303M1104.0 168V188M1106.0 168V304M1107.0 168V303M1108.0 214V304M1109.0 168V188M1110.0 168V188M1111.0 284V304M1113.0 284V304M1115.0 168V258" stroke="#1f7cc6" stroke-width="0.8" opacity="0.5"/><rect x="684.8" y="168" width="1" height="3" fill="#fff" opacity="0.6"/><rect x="1171.3" y="168" width="1" height="3" fill="#fff" opacity="0.6"/><rect x="824.4" y="302.5" width="2" height="1" fill="#fff" opacity="0.6"/><rect x="625.3" y="300.5" width="1.5" height="3" fill="#fff" opacity="0.6"/><rect x="928.2" y="168" width="1" height="1" fill="#fff" opacity="0.6"/><rect x="673.7" y="302.5" width="2" height="1" fill="#fff" opacity="0.6"/><rect x="770.3" y="301.5" width="1" height="2" fill="#fff" opacity="0.6"/><rect x="788.8" y="168" width="1" height="2" fill="#fff" opacity="0.6"/><rect x="778.9" y="168" width="2" height="2" fill="#fff" opacity="0.6"/><rect x="875.0" y="168" width="3" height="2" fill="#fff" opacity="0.6"/><rect x="657.2" y="300.5" width="2" height="3" fill="#fff" opacity="0.6"/><rect x="1165.9" y="168" width="2" height="1" fill="#fff" opacity="0.6"/><rect x="698.9" y="168" width="2" height="3" fill="#fff" opacity="0.6"/><rect x="579.2" y="168" width="3" height="2" fill="#fff" opacity="0.6"/><rect x="742.4" y="168" width="1" height="1" fill="#fff" opacity="0.6"/><rect x="630.8" y="301.5" width="1.5" height="2" fill="#fff" opacity="0.6"/><rect x="1059.4" y="302.5" width="1" height="1" fill="#fff" opacity="0.6"/><rect x="729.6" y="301.5" width="2" height="2" fill="#fff" opacity="0.6"/><rect x="1016" y="167" width="3" height="23" fill="#ffffff" opacity="0.9"/><rect x="1027" y="167" width="2.5" height="24" fill="#ffffff" opacity="0.9"/><rect x="1077" y="167" width="3" height="8" fill="#ffffff" opacity="0.9"/><rect x="1117" y="167" width="2" height="28" fill="#ffffff" opacity="0.9"/><rect x="1171" y="167" width="2" height="33" fill="#ffffff" opacity="0.9"/><rect x="912" y="291" width="3" height="12.5" fill="#ffffff" opacity="0.9"/><rect x="1020" y="286" width="3" height="17.5" fill="#ffffff" opacity="0.9"/><rect x="1117" y="294" width="2" height="9.5" fill="#ffffff" opacity="0.9"/><rect x="837.5" y="167" width="1.5" height="33" fill="#ffffff" opacity="0.9"/><rect x="639.7" y="167" width="3.199999999999932" height="5" fill="#ffffff" opacity="0.9"/><rect x="707.7" y="167" width="2.199999999999932" height="6.5" fill="#ffffff" opacity="0.9"/><rect x="752" y="167" width="3" height="5" fill="#ffffff" opacity="0.9"/><rect x="748.8" y="295" width="3.2000000000000455" height="8.5" fill="#ffffff" opacity="0.9"/><path d="M588.5 303.5V310M588.5 161V168" stroke="#c8c8c8" stroke-width="1" opacity="0.8"/><path d="M654.5 303.5V310M654.5 161V168" stroke="#c8c8c8" stroke-width="1" opacity="0.8"/><path d="M719.5 303.5V310M719.5 161V168" stroke="#c8c8c8" stroke-width="1" opacity="0.8"/><path d="M785.5 303.5V310M785.5 161V168" stroke="#c8c8c8" stroke-width="1" opacity="0.8"/><path d="M851.5 303.5V310M851.5 161V168" stroke="#c8c8c8" stroke-width="1" opacity="0.8"/><path d="M916.5 303.5V310M916.5 161V168" stroke="#c8c8c8" stroke-width="1" opacity="0.8"/><path d="M982.5 303.5V310M982.5 161V168" stroke="#c8c8c8" stroke-width="1" opacity="0.8"/><path d="M1047.5 303.5V310M1047.5 161V168" stroke="#c8c8c8" stroke-width="1" opacity="0.8"/><path d="M1113.5 303.5V310M1113.5 161V168" stroke="#c8c8c8" stroke-width="1" opacity="0.8"/><path d="M869.0 161V168" stroke="#5fa8de" stroke-width="1.6"/><path d="M865.5 310L869.0 301.5L872.5 310Z" fill="#0f72bd"/><path d="M953.0 161V168" stroke="#5fa8de" stroke-width="1.6"/><path d="M949.5 310L953.0 301.5L956.5 310Z" fill="#0f72bd"/><path d="M1023.0 161V168" stroke="#5fa8de" stroke-width="1.6"/><path d="M1019.5 310L1023.0 301.5L1026.5 310Z" fill="#0f72bd"/><path d="M1087.0 161V168" stroke="#5fa8de" stroke-width="1.6"/><path d="M1083.5 310L1087.0 301.5L1090.5 310Z" fill="#0f72bd"/><path d="M1141.0 161V168" stroke="#5fa8de" stroke-width="1.6"/><path d="M1137.5 310L1141.0 301.5L1144.5 310Z" fill="#0f72bd"/><path d="M762.0 161V168" stroke="#5fa8de" stroke-width="1.6"/><path d="M758.5 310L762.0 301.5L765.5 310Z" fill="#0f72bd"/><path d="M635.0 161V168" stroke="#5fa8de" stroke-width="1.6"/><path d="M631.5 310L635.0 301.5L638.5 310Z" fill="#0f72bd"/><rect x="523.5" y="161.5" width="656" height="149" fill="none" stroke="#1a1a1a" stroke-width="1"/><path d="M523.5 310V313.5" stroke="#1a1a1a" stroke-width="1"/><path d="M588.5 310V313.5" stroke="#1a1a1a" stroke-width="1"/><path d="M654.5 310V313.5" stroke="#1a1a1a" stroke-width="1"/><path d="M719.5 310V313.5" stroke="#1a1a1a" stroke-width="1"/><path d="M785.5 310V313.5" stroke="#1a1a1a" stroke-width="1"/><path d="M851.5 310V313.5" stroke="#1a1a1a" stroke-width="1"/><path d="M916.5 310V313.5" stroke="#1a1a1a" stroke-width="1"/><path d="M982.5 310V313.5" stroke="#1a1a1a" stroke-width="1"/><path d="M1047.5 310V313.5" stroke="#1a1a1a" stroke-width="1"/><path d="M1113.5 310V313.5" stroke="#1a1a1a" stroke-width="1"/><path d="M1178.5 310V313.5" stroke="#1a1a1a" stroke-width="1"/><path d="M519 168H523" stroke="#1a1a1a" stroke-width="1"/><path d="M519 235.5H523" stroke="#1a1a1a" stroke-width="1"/><path d="M519 303.5H523" stroke="#1a1a1a" stroke-width="1"/></svg>
<div class="t" style="left:874.50px;top:298.64px;font-size:12px;color:#1a1a1a;transform:scaleX(0.9481);transform-origin:0 0;">true</div>
<div class="t" style="left:958.50px;top:298.64px;font-size:12px;color:#1a1a1a;transform:scaleX(0.9481);transform-origin:0 0;">true</div>
<div class="t" style="left:1028.50px;top:298.64px;font-size:12px;color:#1a1a1a;transform:scaleX(0.9481);transform-origin:0 0;">true</div>
<div class="t" style="left:1092.50px;top:298.64px;font-size:12px;color:#1a1a1a;transform:scaleX(0.9481);transform-origin:0 0;">true</div>
<div class="t" style="left:1146.50px;top:298.64px;font-size:12px;color:#1a1a1a;transform:scaleX(0.9481);transform-origin:0 0;">true</div>
<div class="t" style="left:767.50px;top:298.64px;font-size:12px;color:#1a1a1a;transform:scaleX(0.9481);transform-origin:0 0;">true</div>
<div class="t" style="left:640.50px;top:298.64px;font-size:12px;color:#1a1a1a;transform:scaleX(0.9481);transform-origin:0 0;">true</div>
<div class="t" style="left:576.80px;top:296.64px;font-size:12px;color:#1a1a1a;">1</div>
<div class="t" style="left:674.80px;top:296.64px;font-size:12px;color:#1a1a1a;">2</div>
<div class="t" style="left:837.80px;top:296.64px;font-size:12px;color:#1a1a1a;">3</div>
<div class="t" style="left:1084.80px;top:296.64px;font-size:12px;color:#1a1a1a;">4</div>
<div class="a" style="left:525px;top:145px;width:8px;height:8px;background:#0072bd"></div>
<div class="t" style="left:537.50px;top:143.69px;font-size:11px;color:#1a1a1a;">s</div>
<div class="t" style="left:520.72px;top:314.54px;font-size:10px;color:#262626;">0</div>
<div class="t" style="left:581.55px;top:314.54px;font-size:10px;color:#262626;">0.2</div>
<div class="t" style="left:647.55px;top:314.54px;font-size:10px;color:#262626;">0.4</div>
<div class="t" style="left:712.55px;top:314.54px;font-size:10px;color:#262626;">0.6</div>
<div class="t" style="left:778.55px;top:314.54px;font-size:10px;color:#262626;">0.8</div>
<div class="t" style="left:844.55px;top:314.54px;font-size:10px;color:#262626;">1.0</div>
<div class="t" style="left:909.55px;top:314.54px;font-size:10px;color:#262626;">1.2</div>
<div class="t" style="left:975.55px;top:314.54px;font-size:10px;color:#262626;">1.4</div>
<div class="t" style="left:1040.55px;top:314.54px;font-size:10px;color:#262626;">1.6</div>
<div class="t" style="left:1106.55px;top:314.54px;font-size:10px;color:#262626;">1.8</div>
<div class="t" style="left:1170.05px;top:314.54px;font-size:10px;color:#262626;">2.0</div>
<div class="t" style="left:510.94px;top:163.13px;font-size:10px;color:#262626;">1</div>
<div class="t" style="left:510.94px;top:230.63px;font-size:10px;color:#262626;">0</div>
<div class="t" style="left:507.61px;top:298.14px;font-size:10px;color:#262626;">-1</div>
<div class="t" style="left:828.90px;top:336.74px;font-size:10px;color:#262626;transform:scaleX(0.9978);transform-origin:0 0;">Time (s)</div>
<svg style="left:0;top:0" width="1202" height="799" viewBox="0 0 1202 799"><defs><linearGradient id="parg" x1="0" x2="1" y1="0" y2="0"><stop offset="0" stop-color="#352a87"/><stop offset="0.05" stop-color="#3a3cb8"/><stop offset="0.11" stop-color="#2455e4"/><stop offset="0.17" stop-color="#1270e0"/><stop offset="0.24" stop-color="#1a84d8"/><stop offset="0.31" stop-color="#1f94d4"/><stop offset="0.37" stop-color="#12a4c8"/><stop offset="0.44" stop-color="#1db4b0"/><stop offset="0.5" stop-color="#3ebc98"/><stop offset="0.565" stop-color="#80c070"/><stop offset="0.63" stop-color="#a8bc62"/><stop offset="0.693" stop-color="#c8b858"/><stop offset="0.758" stop-color="#dab456"/><stop offset="0.823" stop-color="#f7b83e"/><stop offset="0.888" stop-color="#fcc432"/><stop offset="0.953" stop-color="#f1dc22"/><stop offset="1.0" stop-color="#f9fb0e"/></linearGradient></defs><rect x="523.5" y="356.5" width="657" height="13" fill="url(#parg)" stroke="#111" stroke-width="1"/><path d="M551.3 357V359" stroke="#222" stroke-width="1"/><path d="M594.1 357V359" stroke="#222" stroke-width="1"/><path d="M637.0 357V359" stroke="#222" stroke-width="1"/><path d="M679.8 357V359" stroke="#222" stroke-width="1"/><path d="M722.7 357V359" stroke="#222" stroke-width="1"/><path d="M765.5 357V359" stroke="#222" stroke-width="1"/><path d="M808.4 357V359" stroke="#222" stroke-width="1"/><path d="M851.2 357V359" stroke="#222" stroke-width="1"/><path d="M894.1 357V359" stroke="#222" stroke-width="1"/><path d="M937.0 357V359" stroke="#222" stroke-width="1"/><path d="M979.8 357V359" stroke="#222" stroke-width="1"/><path d="M1022.6 357V359" stroke="#222" stroke-width="1"/><path d="M1065.5 357V359" stroke="#222" stroke-width="1"/><path d="M1108.3 357V359" stroke="#222" stroke-width="1"/><path d="M1151.2 357V359" stroke="#222" stroke-width="1"/></svg>
<div class="t" style="left:532.70px;top:358.88px;font-size:9px;color:#1f1f3a;transform:scaleX(0.9947);transform-origin:0 0;">-150 (dB)</div>
<div class="t" style="left:585.15px;top:358.88px;font-size:9px;color:#222;">-140</div>
<div class="t" style="left:628.00px;top:358.88px;font-size:9px;color:#222;">-130</div>
<div class="t" style="left:670.85px;top:358.88px;font-size:9px;color:#222;">-120</div>
<div class="t" style="left:714.04px;top:358.88px;font-size:9px;color:#222;">-110</div>
<div class="t" style="left:756.55px;top:358.88px;font-size:9px;color:#222;">-100</div>
<div class="t" style="left:801.90px;top:358.88px;font-size:9px;color:#222;">-90</div>
<div class="t" style="left:844.75px;top:358.88px;font-size:9px;color:#222;">-80</div>
<div class="t" style="left:887.60px;top:358.88px;font-size:9px;color:#222;">-70</div>
<div class="t" style="left:930.45px;top:358.88px;font-size:9px;color:#222;">-60</div>
<div class="t" style="left:973.30px;top:358.88px;font-size:9px;color:#222;">-50</div>
<div class="t" style="left:1016.15px;top:358.88px;font-size:9px;color:#222;">-40</div>
<div class="t" style="left:1059.00px;top:358.88px;font-size:9px;color:#222;">-30</div>
<div class="t" style="left:1101.85px;top:358.88px;font-size:9px;color:#222;">-20</div>
<div class="t" style="left:1144.70px;top:358.88px;font-size:9px;color:#222;">-10</div>
<svg style="left:0;top:0" width="1202" height="799" viewBox="0 0 1202 799"><defs><clipPath id="spc"><rect x="524" y="377" width="655" height="153"/></clipPath><radialGradient id="blob"><stop offset="0" stop-color="#d2b458"/><stop offset="0.25" stop-color="#b8bc62"/><stop offset="0.45" stop-color="#74be7e"/><stop offset="0.65" stop-color="#18aabe"/><stop offset="0.82" stop-color="#1490d4"/><stop offset="0.94" stop-color="#1c62e6"/><stop offset="1" stop-color="#3040b0"/></radialGradient></defs><rect x="522" y="374" width="659.5" height="158" fill="#8a8a8a"/><rect x="522" y="374" width="659.5" height="2" fill="#a8a8a8"/><rect x="524" y="377" width="655" height="153" fill="#352a87"/><g clip-path="url(#spc)"><polygon points="506.4,460.7 508.7,460.4 511.0,460.0 513.3,459.7 515.6,459.3 517.9,459.0 520.2,458.6 522.6,458.3 524.9,457.9 527.2,457.6 529.5,457.3 531.8,456.9 534.1,456.6 536.4,456.2 538.7,455.9 540.9,455.6 543.2,455.3 545.5,454.9 547.8,454.6 550.1,454.3 552.4,454.0 554.6,453.7 556.9,453.5 559.2,453.2 561.5,452.9 563.7,452.7 566.0,452.4 568.3,452.2 570.5,452.0 572.8,451.8 575.1,451.6 577.3,451.4 579.6,451.2 581.8,451.0 584.1,450.9 586.3,450.8 588.6,450.6 590.8,450.5 593.0,450.4 595.3,450.4 597.5,450.3 599.7,450.3 602.0,450.3 604.2,450.3 606.4,450.3 608.7,450.3 610.9,450.4 613.1,450.4 615.3,450.5 617.5,450.6 619.7,450.8 622.0,450.9 624.2,451.1 626.4,451.3 628.6,451.5 630.8,451.8 633.0,452.0 635.2,452.3 637.4,452.7 639.6,453.0 641.8,453.4 644.0,453.8 646.2,454.2 648.4,454.6 650.6,455.1 652.8,455.6 655.0,456.1 657.2,456.7 659.4,457.3 661.6,457.9 663.8,458.6 666.0,459.3 668.2,460.0 670.4,460.7 672.6,461.5 674.8,462.3 677.0,463.2 679.2,464.0 681.4,465.0 683.6,465.9 685.8,466.9 688.0,467.9 690.3,469.0 692.5,470.1 694.8,471.3 697.0,472.5 699.3,473.7 701.6,474.9 703.9,476.2 706.2,477.5 708.5,478.8 710.8,480.1 713.1,481.4 715.5,482.7 717.8,483.9 720.2,485.2 722.6,486.5 724.9,487.7 727.3,488.9 729.7,490.1 732.2,491.3 734.6,492.4 737.1,493.4 739.5,494.4 742.0,495.4 744.6,496.3 747.1,497.1 749.7,497.9 752.3,498.5 754.9,499.1 757.6,499.5 760.2,499.9 762.9,500.1 765.7,500.2 768.4,500.2 771.2,500.0 773.9,499.7 776.7,499.2 779.4,498.6 782.1,497.8 784.8,496.8 787.5,495.8 790.2,494.5 792.8,493.1 795.4,491.6 797.9,489.9 800.4,488.1 802.9,486.2 805.4,484.1 807.8,481.9 810.3,479.5 812.7,477.0 815.0,474.4 817.4,471.6 819.7,468.7 822.1,465.6 824.4,462.4 826.7,459.1 829.0,455.8 831.3,452.4 833.6,449.0 835.9,445.7 838.3,442.4 840.6,439.1 842.9,436.0 845.2,433.1 847.4,430.4 849.7,427.9 852.0,425.7 854.1,423.8 856.2,422.3 858.2,421.2 860.1,420.3 861.9,419.7 863.5,419.3 864.9,419.1 866.3,418.9 867.6,418.9 869.0,418.9 870.4,419.0 871.8,419.2 873.4,419.5 875.2,420.0 877.0,420.6 878.9,421.5 881.0,422.7 883.1,424.0 885.2,425.5 887.4,427.3 889.6,429.3 891.9,431.5 894.1,433.9 896.4,436.4 898.7,439.2 901.0,442.1 903.3,445.1 905.6,448.2 907.9,451.4 910.2,454.7 912.5,458.0 914.8,461.2 917.1,464.5 919.5,467.7 921.8,470.9 924.1,474.0 926.4,477.0 928.8,479.9 931.2,482.7 933.6,485.4 936.1,487.9 938.7,490.2 941.4,492.4 944.4,494.3 947.7,495.8 951.2,496.9 955.0,497.3 958.6,497.0 962.1,496.0 965.4,494.6 968.3,492.9 971.1,490.9 973.8,488.7 976.3,486.4 978.7,483.9 981.2,481.2 983.5,478.5 985.9,475.6 988.2,472.7 990.5,469.6 992.8,466.6 995.2,463.5 997.5,460.4 999.8,457.4 1002.1,454.4 1004.4,451.6 1006.7,448.9 1008.9,446.4 1011.2,444.1 1013.4,442.0 1015.6,440.3 1017.7,438.9 1019.6,437.9 1021.3,437.3 1022.7,437.1 1023.7,437.1 1024.4,437.1 1025.2,437.1 1026.3,437.1 1027.6,437.3 1029.3,437.8 1031.2,438.7 1033.2,439.8 1035.3,441.2 1037.5,442.9 1039.7,444.8 1042.0,446.8 1044.3,449.0 1046.6,451.3 1048.9,453.6 1051.2,456.0 1053.6,458.3 1056.0,460.6 1058.4,462.8 1060.9,464.9 1063.3,466.9 1065.9,468.8 1068.4,470.5 1071.1,472.1 1073.8,473.6 1076.5,474.8 1079.4,475.9 1082.3,476.8 1085.3,477.4 1088.4,477.7 1091.5,477.7 1094.6,477.4 1097.7,476.8 1100.8,475.8 1103.7,474.6 1106.5,473.2 1109.2,471.6 1111.8,469.9 1114.2,468.2 1116.6,466.4 1119.0,464.7 1121.3,463.0 1123.6,461.4 1125.8,460.0 1128.0,458.6 1130.1,457.5 1132.1,456.5 1134.1,455.8 1135.9,455.2 1137.6,454.8 1139.4,454.4 1141.1,454.2 1142.8,454.1 1144.5,454.0 1146.2,454.0 1148.0,454.1 1149.9,454.2 1151.8,454.5 1153.7,454.8 1155.7,455.3 1157.7,455.8 1159.7,456.4 1161.8,457.1 1164.0,457.8 1166.1,458.7 1168.3,459.6 1170.6,460.5 1172.8,461.5 1175.1,462.6 1177.3,463.6 1179.6,464.7 1182.0,465.9 1184.3,467.0 1186.7,468.1 1189.0,469.2 1191.4,470.3 1198.6,454.0 1196.3,453.0 1194.1,452.0 1191.9,451.0 1189.6,449.9 1187.3,448.8 1185.0,447.7 1182.6,446.6 1180.3,445.4 1177.9,444.3 1175.5,443.2 1173.1,442.1 1170.6,441.1 1168.2,440.1 1165.6,439.1 1163.1,438.2 1160.5,437.4 1157.9,436.7 1155.2,436.0 1152.4,435.5 1149.7,435.2 1146.8,435.0 1144.0,435.0 1141.1,435.2 1138.2,435.6 1135.3,436.2 1132.4,437.1 1129.5,438.2 1126.7,439.6 1124.0,441.1 1121.4,442.8 1118.9,444.5 1116.5,446.2 1114.1,447.9 1111.7,449.6 1109.5,451.2 1107.2,452.8 1105.0,454.2 1102.9,455.4 1100.8,456.5 1098.9,457.3 1097.1,457.9 1095.4,458.3 1093.8,458.5 1092.3,458.7 1090.8,458.7 1089.3,458.7 1087.8,458.6 1086.1,458.5 1084.5,458.2 1082.7,457.7 1080.9,457.2 1078.9,456.5 1077.0,455.6 1074.9,454.5 1072.8,453.3 1070.7,451.9 1068.5,450.4 1066.3,448.7 1064.1,446.9 1061.8,444.9 1059.6,442.7 1057.3,440.5 1055.0,438.2 1052.6,435.8 1050.3,433.5 1047.9,431.2 1045.5,428.9 1043.0,426.7 1040.4,424.6 1037.6,422.6 1034.7,420.9 1031.4,419.4 1027.9,418.4 1024.0,418.1 1020.1,418.7 1016.5,420.0 1013.3,421.7 1010.4,423.8 1007.7,426.1 1005.2,428.6 1002.7,431.2 1000.3,434.0 998.0,436.9 995.6,439.8 993.3,442.8 991.0,445.9 988.7,449.0 986.4,452.0 984.1,455.1 981.8,458.0 979.5,460.9 977.2,463.6 974.9,466.2 972.6,468.6 970.4,470.7 968.2,472.7 966.0,474.4 963.9,475.7 962.0,476.8 960.1,477.6 958.5,478.0 957.1,478.2 956.0,478.3 955.0,478.3 954.2,478.3 953.1,478.3 951.7,478.1 950.1,477.6 948.2,476.7 946.2,475.5 944.1,474.0 941.9,472.2 939.7,470.0 937.4,467.7 935.1,465.1 932.8,462.4 930.5,459.4 928.2,456.4 925.9,453.3 923.6,450.1 921.3,446.8 919.0,443.6 916.7,440.3 914.4,437.0 912.1,433.8 909.8,430.6 907.4,427.5 905.1,424.5 902.8,421.6 900.4,418.9 898.0,416.3 895.6,413.8 893.1,411.5 890.6,409.3 888.0,407.3 885.3,405.4 882.5,403.8 879.6,402.4 876.6,401.3 873.5,400.4 870.3,400.0 867.0,399.9 863.7,400.2 860.4,401.0 857.3,402.2 854.3,403.7 851.4,405.6 848.7,407.7 846.1,410.1 843.6,412.7 841.1,415.5 838.7,418.4 836.4,421.5 834.1,424.7 831.8,427.9 829.4,431.3 827.1,434.6 824.8,438.0 822.5,441.4 820.2,444.7 817.9,448.0 815.6,451.1 813.3,454.1 811.0,456.9 808.7,459.5 806.5,461.9 804.2,464.1 802.0,466.2 799.7,468.2 797.5,469.9 795.4,471.5 793.2,473.0 791.1,474.3 789.0,475.5 786.9,476.5 784.9,477.4 782.9,478.2 781.0,478.9 779.0,479.5 777.1,480.0 775.2,480.4 773.3,480.7 771.5,481.0 769.6,481.1 767.7,481.2 765.9,481.2 764.0,481.2 762.1,481.1 760.1,480.9 758.2,480.6 756.2,480.2 754.2,479.8 752.1,479.3 750.1,478.8 748.0,478.1 745.9,477.4 743.7,476.7 741.6,475.8 739.4,475.0 737.2,474.0 735.0,473.0 732.8,472.0 730.5,470.9 728.3,469.8 726.0,468.6 723.7,467.4 721.5,466.2 719.2,464.9 716.9,463.7 714.6,462.4 712.3,461.1 710.0,459.8 707.6,458.5 705.3,457.2 702.9,455.9 700.6,454.7 698.2,453.4 695.8,452.2 693.4,451.0 691.0,449.8 688.6,448.7 686.2,447.6 683.8,446.5 681.4,445.5 679.0,444.6 676.6,443.6 674.1,442.7 671.7,441.9 669.3,441.1 666.9,440.3 664.5,439.6 662.1,438.9 659.6,438.2 657.2,437.6 654.8,437.0 652.4,436.4 650.0,435.9 647.5,435.4 645.1,434.9 642.7,434.5 640.3,434.0 637.9,433.7 635.5,433.3 633.1,433.0 630.7,432.7 628.2,432.5 625.8,432.2 623.4,432.0 621.0,431.8 618.6,431.7 616.2,431.6 613.8,431.5 611.4,431.4 609.0,431.3 606.6,431.3 604.3,431.3 601.9,431.3 599.5,431.3 597.1,431.3 594.7,431.4 592.3,431.5 590.0,431.6 587.6,431.7 585.2,431.8 582.9,432.0 580.5,432.1 578.1,432.3 575.8,432.5 573.4,432.7 571.0,432.9 568.7,433.1 566.3,433.4 564.0,433.6 561.6,433.9 559.3,434.1 557.0,434.4 554.6,434.7 552.3,435.0 549.9,435.3 547.6,435.6 545.3,435.9 542.9,436.3 540.6,436.6 538.3,436.9 536.0,437.2 533.6,437.6 531.3,437.9 529.0,438.3 526.7,438.6 524.4,439.0 522.1,439.3 519.8,439.6 517.4,440.0 515.1,440.3 512.8,440.7 510.5,441.0 508.2,441.4 505.9,441.7 503.6,442.0" fill="#1c5ee4"/><polygon points="506.3,460.1 508.6,459.8 510.9,459.4 513.2,459.1 515.5,458.7 517.8,458.4 520.2,458.0 522.5,457.7 524.8,457.4 527.1,457.0 529.4,456.7 531.7,456.3 534.0,456.0 536.3,455.7 538.6,455.3 540.9,455.0 543.2,454.7 545.4,454.4 547.7,454.0 550.0,453.7 552.3,453.4 554.6,453.2 556.9,452.9 559.1,452.6 561.4,452.3 563.7,452.1 565.9,451.8 568.2,451.6 570.5,451.4 572.7,451.2 575.0,451.0 577.3,450.8 579.5,450.6 581.8,450.4 584.0,450.3 586.3,450.2 588.5,450.0 590.8,449.9 593.0,449.8 595.3,449.8 597.5,449.7 599.7,449.7 602.0,449.7 604.2,449.7 606.4,449.7 608.7,449.7 610.9,449.8 613.1,449.8 615.3,449.9 617.6,450.0 619.8,450.2 622.0,450.3 624.2,450.5 626.4,450.7 628.6,450.9 630.9,451.2 633.1,451.5 635.3,451.7 637.5,452.1 639.7,452.4 641.9,452.8 644.1,453.2 646.3,453.6 648.5,454.1 650.7,454.5 652.9,455.0 655.1,455.6 657.3,456.1 659.5,456.7 661.7,457.4 663.9,458.0 666.1,458.7 668.4,459.4 670.6,460.2 672.8,461.0 675.0,461.8 677.2,462.6 679.4,463.5 681.6,464.4 683.8,465.4 686.1,466.4 688.3,467.4 690.5,468.5 692.8,469.7 695.0,470.8 697.3,472.0 699.6,473.2 701.9,474.5 704.1,475.7 706.4,477.0 708.8,478.3 711.1,479.6 713.4,480.9 715.7,482.2 718.1,483.5 720.4,484.7 722.8,486.0 725.2,487.2 727.6,488.4 730.0,489.6 732.4,490.7 734.8,491.8 737.3,492.9 739.7,493.9 742.2,494.9 744.7,495.7 747.3,496.6 749.8,497.3 752.4,497.9 755.0,498.5 757.6,499.0 760.3,499.3 763.0,499.5 765.7,499.6 768.4,499.6 771.1,499.4 773.8,499.1 776.6,498.6 779.3,498.0 782.0,497.2 784.6,496.3 787.3,495.2 789.9,494.0 792.5,492.6 795.1,491.1 797.6,489.5 800.1,487.7 802.6,485.8 805.1,483.7 807.5,481.5 809.9,479.2 812.3,476.7 814.7,474.1 817.0,471.3 819.4,468.4 821.7,465.3 824.0,462.2 826.4,458.9 828.7,455.5 831.0,452.2 833.3,448.8 835.6,445.4 837.9,442.1 840.2,438.9 842.5,435.8 844.8,432.8 847.1,430.1 849.4,427.6 851.6,425.4 853.8,423.5 855.9,421.9 857.9,420.7 859.8,419.8 861.6,419.2 863.3,418.7 864.8,418.5 866.2,418.3 867.6,418.3 869.0,418.3 870.5,418.4 872.0,418.6 873.6,418.9 875.4,419.5 877.3,420.2 879.2,421.1 881.3,422.2 883.4,423.6 885.5,425.2 887.7,427.0 890.0,429.0 892.2,431.2 894.5,433.6 896.7,436.2 899.0,438.9 901.3,441.8 903.6,444.9 905.9,448.0 908.3,451.2 910.6,454.4 912.9,457.7 915.2,461.0 917.5,464.3 919.8,467.5 922.1,470.7 924.4,473.7 926.8,476.7 929.1,479.6 931.5,482.4 933.9,485.0 936.4,487.5 939.0,489.8 941.7,491.9 944.6,493.8 947.8,495.3 951.3,496.3 955.0,496.7 958.6,496.4 962.0,495.5 965.1,494.1 968.1,492.4 970.8,490.4 973.4,488.3 976.0,486.0 978.4,483.5 980.8,480.9 983.2,478.2 985.5,475.3 987.9,472.4 990.2,469.4 992.5,466.3 994.8,463.2 997.1,460.2 999.4,457.1 1001.7,454.2 1004.0,451.3 1006.3,448.6 1008.6,446.1 1010.9,443.8 1013.1,441.7 1015.3,439.9 1017.3,438.5 1019.3,437.5 1021.0,436.8 1022.5,436.5 1023.6,436.5 1024.4,436.5 1025.3,436.5 1026.4,436.6 1027.9,436.8 1029.6,437.4 1031.5,438.2 1033.5,439.4 1035.6,440.8 1037.8,442.5 1040.1,444.4 1042.3,446.5 1044.6,448.7 1046.9,450.9 1049.2,453.3 1051.6,455.6 1053.9,457.9 1056.3,460.2 1058.7,462.4 1061.2,464.5 1063.6,466.5 1066.1,468.3 1068.7,470.1 1071.3,471.6 1074.0,473.1 1076.7,474.3 1079.5,475.4 1082.4,476.2 1085.4,476.8 1088.4,477.1 1091.5,477.1 1094.6,476.8 1097.6,476.2 1100.6,475.3 1103.5,474.1 1106.3,472.7 1108.9,471.1 1111.5,469.4 1113.9,467.7 1116.3,466.0 1118.7,464.3 1121.0,462.6 1123.3,461.0 1125.5,459.5 1127.7,458.2 1129.9,457.0 1131.9,456.0 1133.8,455.2 1135.7,454.7 1137.5,454.2 1139.2,453.9 1141.0,453.6 1142.7,453.5 1144.5,453.4 1146.3,453.4 1148.1,453.5 1150.0,453.6 1151.9,453.9 1153.8,454.3 1155.8,454.7 1157.9,455.2 1159.9,455.8 1162.0,456.5 1164.2,457.3 1166.4,458.1 1168.6,459.0 1170.8,460.0 1173.0,461.0 1175.3,462.0 1177.6,463.1 1179.9,464.2 1182.2,465.3 1184.5,466.5 1186.9,467.6 1189.3,468.7 1191.6,469.8 1198.4,454.5 1196.1,453.5 1193.9,452.5 1191.6,451.5 1189.3,450.4 1187.0,449.3 1184.7,448.2 1182.4,447.1 1180.0,446.0 1177.7,444.8 1175.3,443.7 1172.9,442.6 1170.4,441.6 1168.0,440.6 1165.4,439.6 1162.9,438.8 1160.3,437.9 1157.7,437.2 1155.1,436.6 1152.4,436.1 1149.6,435.8 1146.8,435.6 1144.0,435.6 1141.1,435.8 1138.3,436.2 1135.4,436.8 1132.5,437.7 1129.7,438.8 1126.9,440.1 1124.3,441.6 1121.7,443.2 1119.2,444.9 1116.8,446.6 1114.4,448.3 1112.1,450.0 1109.8,451.7 1107.5,453.2 1105.3,454.6 1103.1,455.9 1101.1,456.9 1099.1,457.8 1097.3,458.4 1095.6,458.8 1093.9,459.1 1092.4,459.3 1090.8,459.3 1089.3,459.3 1087.7,459.2 1086.0,459.0 1084.3,458.7 1082.5,458.3 1080.6,457.7 1078.7,456.9 1076.7,456.0 1074.6,455.0 1072.5,453.7 1070.4,452.4 1068.2,450.8 1066.0,449.1 1063.8,447.3 1061.5,445.2 1059.2,443.1 1056.9,440.8 1054.6,438.5 1052.3,436.2 1049.9,433.9 1047.6,431.5 1045.1,429.3 1042.6,427.1 1040.1,425.0 1037.4,423.1 1034.4,421.4 1031.3,420.0 1027.8,419.0 1024.0,418.7 1020.3,419.2 1016.7,420.5 1013.6,422.2 1010.7,424.3 1008.0,426.5 1005.5,429.0 1003.1,431.6 1000.7,434.3 998.3,437.2 996.0,440.1 993.7,443.1 991.3,446.1 989.0,449.2 986.7,452.3 984.4,455.3 982.1,458.3 979.8,461.2 977.5,463.9 975.2,466.5 973.0,468.9 970.7,471.1 968.5,473.0 966.3,474.7 964.2,476.1 962.2,477.2 960.4,478.0 958.7,478.6 957.3,478.8 956.1,478.9 955.0,478.9 954.1,478.9 952.9,478.8 951.5,478.6 949.8,478.0 947.9,477.2 945.9,475.9 943.8,474.4 941.6,472.5 939.3,470.4 937.1,468.0 934.8,465.4 932.5,462.6 930.2,459.7 927.9,456.7 925.6,453.5 923.3,450.3 921.0,447.1 918.7,443.8 916.4,440.5 914.0,437.3 911.7,434.0 909.4,430.9 907.1,427.8 904.8,424.8 902.4,421.9 900.0,419.2 897.7,416.6 895.2,414.2 892.8,411.8 890.3,409.7 887.7,407.7 885.0,405.9 882.3,404.3 879.4,402.9 876.5,401.8 873.4,401.0 870.2,400.6 867.0,400.5 863.8,400.8 860.6,401.6 857.5,402.7 854.5,404.2 851.7,406.0 849.0,408.1 846.4,410.5 843.9,413.0 841.5,415.8 839.1,418.7 836.7,421.8 834.4,424.9 832.1,428.2 829.8,431.5 827.5,434.9 825.2,438.3 822.9,441.6 820.6,445.0 818.3,448.2 815.9,451.3 813.6,454.3 811.4,457.1 809.1,459.7 806.8,462.2 804.5,464.5 802.3,466.6 800.1,468.5 797.9,470.3 795.7,471.9 793.5,473.4 791.4,474.7 789.3,475.9 787.2,477.0 785.2,477.9 783.1,478.7 781.2,479.5 779.2,480.1 777.3,480.6 775.3,481.0 773.4,481.3 771.5,481.5 769.6,481.7 767.8,481.8 765.9,481.8 763.9,481.8 762.0,481.6 760.1,481.4 758.1,481.2 756.1,480.8 754.0,480.4 752.0,479.9 749.9,479.3 747.8,478.7 745.7,478.0 743.5,477.2 741.3,476.4 739.2,475.5 737.0,474.5 734.7,473.5 732.5,472.5 730.3,471.4 728.0,470.2 725.8,469.1 723.5,467.9 721.2,466.7 718.9,465.4 716.6,464.1 714.3,462.9 712.0,461.6 709.7,460.3 707.4,459.0 705.0,457.7 702.7,456.4 700.3,455.1 697.9,453.9 695.6,452.7 693.2,451.5 690.8,450.3 688.4,449.2 686.0,448.1 683.6,447.1 681.2,446.1 678.8,445.1 676.4,444.2 674.0,443.3 671.5,442.4 669.1,441.6 666.7,440.9 664.3,440.1 661.9,439.4 659.5,438.8 657.1,438.1 654.7,437.5 652.3,437.0 649.8,436.4 647.4,435.9 645.0,435.5 642.6,435.0 640.2,434.6 637.8,434.3 635.4,433.9 633.0,433.6 630.6,433.3 628.2,433.1 625.8,432.8 623.4,432.6 621.0,432.4 618.6,432.3 616.2,432.2 613.8,432.1 611.4,432.0 609.0,431.9 606.6,431.9 604.3,431.9 601.9,431.9 599.5,431.9 597.1,431.9 594.7,432.0 592.4,432.1 590.0,432.2 587.6,432.3 585.3,432.4 582.9,432.5 580.5,432.7 578.2,432.9 575.8,433.1 573.5,433.3 571.1,433.5 568.8,433.7 566.4,434.0 564.1,434.2 561.7,434.5 559.4,434.7 557.0,435.0 554.7,435.3 552.3,435.6 550.0,435.9 547.7,436.2 545.4,436.5 543.0,436.8 540.7,437.2 538.4,437.5 536.0,437.8 533.7,438.2 531.4,438.5 529.1,438.9 526.8,439.2 524.5,439.5 522.2,439.9 519.8,440.2 517.5,440.6 515.2,440.9 512.9,441.3 510.6,441.6 508.3,442.0 506.0,442.3 503.7,442.6" fill="#0a8ed8"/><polygon points="506.2,459.4 508.5,459.1 510.8,458.7 513.1,458.4 515.4,458.0 517.7,457.7 520.1,457.4 522.4,457.0 524.7,456.7 527.0,456.3 529.3,456.0 531.6,455.6 533.9,455.3 536.2,455.0 538.5,454.6 540.8,454.3 543.1,454.0 545.3,453.7 547.6,453.4 549.9,453.1 552.2,452.8 554.5,452.5 556.8,452.2 559.0,451.9 561.3,451.6 563.6,451.4 565.9,451.1 568.1,450.9 570.4,450.7 572.7,450.5 574.9,450.3 577.2,450.1 579.5,449.9 581.7,449.7 584.0,449.6 586.2,449.5 588.5,449.3 590.7,449.2 593.0,449.1 595.2,449.1 597.5,449.0 599.7,449.0 602.0,449.0 604.2,449.0 606.4,449.0 608.7,449.0 610.9,449.1 613.1,449.1 615.4,449.2 617.6,449.3 619.8,449.5 622.1,449.6 624.3,449.8 626.5,450.0 628.7,450.2 630.9,450.5 633.2,450.8 635.4,451.1 637.6,451.4 639.8,451.7 642.0,452.1 644.2,452.5 646.4,452.9 648.7,453.4 650.9,453.9 653.1,454.4 655.3,454.9 657.5,455.5 659.7,456.1 661.9,456.7 664.1,457.4 666.4,458.1 668.6,458.8 670.8,459.5 673.0,460.3 675.2,461.2 677.4,462.0 679.7,462.9 681.9,463.8 684.1,464.8 686.3,465.8 688.6,466.9 690.8,468.0 693.1,469.1 695.3,470.2 697.6,471.4 699.9,472.7 702.2,473.9 704.5,475.2 706.8,476.5 709.1,477.7 711.4,479.0 713.7,480.3 716.0,481.6 718.4,482.9 720.7,484.2 723.1,485.4 725.5,486.6 727.9,487.8 730.2,489.0 732.7,490.1 735.1,491.2 737.5,492.3 740.0,493.3 742.4,494.2 744.9,495.1 747.4,495.9 750.0,496.6 752.5,497.3 755.1,497.8 757.7,498.3 760.4,498.6 763.0,498.8 765.7,498.9 768.4,498.9 771.1,498.7 773.8,498.4 776.4,497.9 779.1,497.3 781.8,496.6 784.4,495.7 787.1,494.6 789.7,493.4 792.2,492.1 794.8,490.6 797.3,488.9 799.8,487.2 802.3,485.3 804.7,483.2 807.1,481.1 809.5,478.7 811.9,476.3 814.3,473.7 816.6,470.9 819.0,468.0 821.3,465.0 823.6,461.8 825.9,458.6 828.3,455.3 830.6,451.9 832.9,448.5 835.2,445.1 837.5,441.8 839.8,438.6 842.1,435.5 844.4,432.5 846.7,429.8 849.0,427.2 851.2,425.0 853.4,423.1 855.5,421.5 857.6,420.2 859.5,419.3 861.3,418.6 863.0,418.1 864.6,417.8 866.1,417.6 867.6,417.6 869.1,417.6 870.6,417.7 872.2,417.9 873.9,418.3 875.7,418.9 877.6,419.6 879.6,420.6 881.6,421.7 883.7,423.1 885.9,424.7 888.1,426.6 890.3,428.6 892.6,430.8 894.9,433.2 897.2,435.8 899.4,438.6 901.7,441.5 904.1,444.6 906.4,447.7 908.7,450.9 911.0,454.1 913.3,457.4 915.6,460.7 917.9,464.0 920.2,467.2 922.5,470.3 924.8,473.4 927.2,476.4 929.5,479.3 931.9,482.0 934.3,484.6 936.8,487.0 939.3,489.3 942.0,491.4 944.9,493.2 948.0,494.6 951.4,495.6 955.0,496.0 958.5,495.7 961.8,494.8 964.9,493.5 967.8,491.8 970.5,489.9 973.1,487.8 975.6,485.5 978.0,483.1 980.4,480.5 982.8,477.8 985.1,475.0 987.5,472.0 989.8,469.0 992.1,466.0 994.4,462.9 996.7,459.8 999.0,456.8 1001.3,453.9 1003.6,451.0 1005.9,448.3 1008.2,445.7 1010.5,443.4 1012.7,441.3 1014.9,439.5 1017.0,438.0 1019.0,437.0 1020.7,436.2 1022.3,435.9 1023.5,435.8 1024.4,435.8 1025.4,435.8 1026.6,435.9 1028.1,436.2 1029.9,436.8 1031.8,437.7 1033.9,438.9 1036.0,440.4 1038.2,442.1 1040.5,444.0 1042.7,446.1 1045.0,448.3 1047.3,450.5 1049.6,452.9 1052.0,455.2 1054.3,457.5 1056.7,459.8 1059.1,462.0 1061.5,464.0 1064.0,466.0 1066.5,467.8 1069.0,469.5 1071.6,471.1 1074.2,472.4 1076.9,473.7 1079.7,474.7 1082.6,475.5 1085.5,476.1 1088.5,476.4 1091.5,476.4 1094.5,476.1 1097.5,475.5 1100.4,474.6 1103.3,473.5 1106.0,472.1 1108.6,470.5 1111.1,468.9 1113.6,467.2 1116.0,465.5 1118.4,463.8 1120.7,462.1 1123.0,460.5 1125.2,459.0 1127.4,457.7 1129.5,456.5 1131.6,455.4 1133.6,454.7 1135.4,454.0 1137.3,453.6 1139.1,453.2 1140.9,452.9 1142.7,452.8 1144.5,452.7 1146.3,452.7 1148.1,452.8 1150.0,453.0 1152.0,453.2 1154.0,453.6 1156.0,454.0 1158.1,454.6 1160.2,455.2 1162.3,455.9 1164.4,456.7 1166.6,457.5 1168.8,458.4 1171.1,459.4 1173.3,460.4 1175.6,461.5 1177.9,462.5 1180.2,463.6 1182.5,464.8 1184.8,465.9 1187.2,467.0 1189.5,468.1 1191.9,469.2 1198.1,455.1 1195.8,454.1 1193.6,453.1 1191.3,452.1 1189.1,451.0 1186.8,449.9 1184.4,448.8 1182.1,447.7 1179.8,446.5 1177.4,445.4 1175.0,444.3 1172.6,443.3 1170.2,442.2 1167.7,441.2 1165.2,440.3 1162.7,439.4 1160.2,438.6 1157.6,437.9 1154.9,437.3 1152.3,436.8 1149.5,436.5 1146.8,436.3 1144.0,436.3 1141.2,436.5 1138.4,436.9 1135.5,437.5 1132.7,438.3 1130.0,439.4 1127.2,440.7 1124.6,442.2 1122.0,443.8 1119.5,445.4 1117.1,447.1 1114.7,448.8 1112.4,450.5 1110.1,452.2 1107.8,453.7 1105.6,455.1 1103.5,456.4 1101.4,457.5 1099.4,458.4 1097.5,459.0 1095.8,459.5 1094.1,459.8 1092.5,459.9 1090.8,460.0 1089.2,460.0 1087.6,459.9 1085.9,459.7 1084.1,459.4 1082.3,458.9 1080.4,458.3 1078.4,457.5 1076.4,456.6 1074.3,455.5 1072.2,454.2 1070.0,452.8 1067.8,451.3 1065.6,449.5 1063.4,447.7 1061.1,445.6 1058.8,443.5 1056.5,441.2 1054.2,438.9 1051.9,436.6 1049.5,434.3 1047.2,432.0 1044.8,429.7 1042.3,427.6 1039.7,425.6 1037.0,423.7 1034.2,422.0 1031.1,420.6 1027.7,419.7 1024.1,419.4 1020.4,419.9 1017.0,421.1 1013.9,422.8 1011.0,424.8 1008.4,427.0 1005.9,429.4 1003.5,432.0 1001.1,434.7 998.7,437.5 996.4,440.4 994.1,443.4 991.8,446.5 989.4,449.5 987.1,452.6 984.8,455.6 982.5,458.6 980.2,461.5 977.9,464.3 975.6,466.8 973.4,469.3 971.1,471.5 968.9,473.4 966.7,475.2 964.6,476.6 962.6,477.8 960.7,478.6 959.0,479.2 957.4,479.5 956.2,479.6 955.0,479.6 954.0,479.6 952.7,479.5 951.2,479.2 949.5,478.6 947.6,477.7 945.5,476.4 943.4,474.8 941.2,472.9 938.9,470.7 936.7,468.3 934.4,465.7 932.1,462.9 929.8,460.0 927.5,457.0 925.2,453.8 922.9,450.6 920.6,447.4 918.3,444.1 916.0,440.8 913.6,437.6 911.3,434.3 909.0,431.2 906.7,428.1 904.4,425.1 902.0,422.3 899.7,419.6 897.3,417.0 894.9,414.6 892.4,412.3 889.9,410.2 887.4,408.2 884.7,406.5 882.0,404.9 879.2,403.6 876.3,402.5 873.3,401.7 870.2,401.3 867.0,401.2 863.9,401.5 860.8,402.2 857.7,403.3 854.8,404.8 852.0,406.6 849.3,408.6 846.8,410.9 844.3,413.5 841.9,416.2 839.5,419.1 837.2,422.1 834.8,425.2 832.5,428.5 830.2,431.8 827.9,435.2 825.6,438.5 823.3,441.9 821.0,445.2 818.7,448.5 816.4,451.6 814.1,454.6 811.8,457.5 809.5,460.1 807.2,462.5 804.9,464.8 802.7,467.0 800.5,468.9 798.2,470.7 796.1,472.4 793.9,473.9 791.7,475.3 789.6,476.5 787.5,477.6 785.5,478.5 783.4,479.3 781.4,480.1 779.4,480.7 777.4,481.2 775.5,481.6 773.6,482.0 771.6,482.2 769.7,482.4 767.8,482.5 765.9,482.5 763.9,482.5 761.9,482.3 760.0,482.1 758.0,481.8 755.9,481.5 753.9,481.1 751.8,480.6 749.7,480.0 747.6,479.3 745.4,478.6 743.3,477.8 741.1,477.0 738.9,476.1 736.7,475.1 734.5,474.1 732.2,473.1 730.0,472.0 727.7,470.8 725.5,469.6 723.2,468.4 720.9,467.2 718.6,466.0 716.3,464.7 714.0,463.4 711.7,462.1 709.4,460.8 707.1,459.5 704.7,458.3 702.4,457.0 700.0,455.7 697.7,454.5 695.3,453.2 692.9,452.1 690.5,450.9 688.1,449.8 685.7,448.7 683.3,447.7 680.9,446.7 678.5,445.7 676.1,444.8 673.7,443.9 671.3,443.1 668.9,442.3 666.5,441.5 664.1,440.8 661.7,440.1 659.3,439.4 656.9,438.8 654.5,438.2 652.1,437.6 649.7,437.1 647.3,436.6 644.9,436.2 642.5,435.7 640.1,435.3 637.7,434.9 635.3,434.6 632.9,434.3 630.5,434.0 628.1,433.8 625.7,433.5 623.3,433.3 620.9,433.1 618.6,433.0 616.2,432.9 613.8,432.7 611.4,432.7 609.0,432.6 606.6,432.6 604.3,432.6 601.9,432.6 599.5,432.6 597.1,432.6 594.8,432.7 592.4,432.8 590.0,432.9 587.7,433.0 585.3,433.1 582.9,433.2 580.6,433.4 578.2,433.6 575.9,433.8 573.5,434.0 571.2,434.2 568.8,434.4 566.5,434.7 564.1,434.9 561.8,435.2 559.4,435.4 557.1,435.7 554.8,436.0 552.4,436.3 550.1,436.6 547.8,436.9 545.4,437.2 543.1,437.5 540.8,437.9 538.5,438.2 536.1,438.5 533.8,438.9 531.5,439.2 529.2,439.5 526.9,439.9 524.6,440.2 522.3,440.6 519.9,440.9 517.6,441.3 515.3,441.6 513.0,442.0 510.7,442.3 508.4,442.6 506.1,443.0 503.8,443.3" fill="#12a8c4"/><polygon points="506.1,458.7 508.4,458.4 510.7,458.0 513.0,457.7 515.3,457.4 517.6,457.0 519.9,456.7 522.3,456.3 524.6,456.0 526.9,455.6 529.2,455.3 531.5,454.9 533.8,454.6 536.1,454.3 538.4,453.9 540.7,453.6 543.0,453.3 545.2,453.0 547.5,452.7 549.8,452.4 552.1,452.1 554.4,451.8 556.7,451.5 559.0,451.2 561.2,450.9 563.5,450.7 565.8,450.4 568.1,450.2 570.3,450.0 572.6,449.8 574.9,449.6 577.1,449.4 579.4,449.2 581.7,449.0 583.9,448.9 586.2,448.8 588.5,448.6 590.7,448.5 593.0,448.4 595.2,448.4 597.5,448.3 599.7,448.3 602.0,448.3 604.2,448.3 606.5,448.3 608.7,448.3 610.9,448.4 613.2,448.4 615.4,448.5 617.6,448.6 619.9,448.8 622.1,448.9 624.3,449.1 626.6,449.3 628.8,449.5 631.0,449.8 633.3,450.1 635.5,450.4 637.7,450.7 639.9,451.0 642.1,451.4 644.4,451.8 646.6,452.3 648.8,452.7 651.0,453.2 653.2,453.7 655.5,454.3 657.7,454.8 659.9,455.4 662.1,456.1 664.3,456.7 666.6,457.4 668.8,458.2 671.0,458.9 673.2,459.7 675.5,460.5 677.7,461.4 679.9,462.3 682.2,463.2 684.4,464.2 686.6,465.2 688.9,466.3 691.1,467.4 693.4,468.5 695.6,469.7 697.9,470.9 700.2,472.1 702.5,473.4 704.8,474.6 707.1,475.9 709.4,477.2 711.7,478.5 714.0,479.8 716.4,481.0 718.7,482.3 721.0,483.6 723.4,484.8 725.8,486.1 728.1,487.3 730.5,488.4 732.9,489.5 735.3,490.6 737.8,491.7 740.2,492.7 742.7,493.6 745.1,494.4 747.6,495.2 750.1,496.0 752.7,496.6 755.2,497.1 757.8,497.6 760.4,497.9 763.1,498.1 765.7,498.2 768.3,498.2 771.0,498.0 773.7,497.7 776.3,497.2 779.0,496.6 781.6,495.9 784.2,495.0 786.8,494.0 789.4,492.8 792.0,491.5 794.5,490.0 797.0,488.4 799.5,486.7 801.9,484.8 804.3,482.8 806.8,480.6 809.1,478.3 811.5,475.9 813.9,473.3 816.2,470.6 818.6,467.7 820.9,464.7 823.2,461.5 825.5,458.3 827.9,455.0 830.2,451.6 832.5,448.2 834.8,444.9 837.1,441.5 839.4,438.3 841.7,435.2 844.0,432.2 846.3,429.4 848.6,426.9 850.8,424.6 853.0,422.6 855.2,421.0 857.2,419.7 859.2,418.7 861.1,418.0 862.8,417.5 864.5,417.2 866.0,417.0 867.6,416.9 869.1,416.9 870.7,417.0 872.3,417.3 874.1,417.7 875.9,418.3 877.9,419.0 879.9,420.0 882.0,421.2 884.1,422.7 886.3,424.3 888.5,426.2 890.7,428.2 893.0,430.4 895.3,432.9 897.6,435.5 899.9,438.3 902.2,441.2 904.5,444.3 906.8,447.4 909.1,450.6 911.4,453.9 913.7,457.1 916.0,460.4 918.3,463.7 920.6,466.9 922.9,470.0 925.3,473.1 927.6,476.0 929.9,478.9 932.3,481.6 934.7,484.2 937.2,486.6 939.7,488.8 942.4,490.8 945.2,492.6 948.2,494.0 951.5,494.9 955.0,495.3 958.4,495.0 961.6,494.2 964.6,492.9 967.5,491.3 970.2,489.4 972.7,487.3 975.2,485.1 977.6,482.7 980.0,480.1 982.4,477.4 984.7,474.6 987.0,471.7 989.4,468.7 991.7,465.7 994.0,462.6 996.3,459.5 998.6,456.5 1000.9,453.5 1003.2,450.7 1005.5,447.9 1007.8,445.4 1010.1,443.0 1012.3,440.9 1014.5,439.1 1016.6,437.6 1018.6,436.4 1020.5,435.7 1022.0,435.3 1023.3,435.1 1024.4,435.1 1025.5,435.1 1026.8,435.3 1028.4,435.6 1030.2,436.2 1032.1,437.2 1034.2,438.4 1036.4,439.9 1038.6,441.7 1040.8,443.6 1043.1,445.7 1045.4,447.9 1047.7,450.1 1050.0,452.5 1052.4,454.8 1054.7,457.1 1057.1,459.4 1059.5,461.5 1061.9,463.6 1064.3,465.5 1066.8,467.3 1069.3,468.9 1071.9,470.5 1074.5,471.8 1077.2,473.0 1079.9,474.0 1082.7,474.8 1085.6,475.4 1088.5,475.7 1091.4,475.7 1094.4,475.4 1097.3,474.9 1100.2,474.0 1103.0,472.9 1105.7,471.5 1108.3,470.0 1110.8,468.4 1113.3,466.7 1115.7,465.0 1118.0,463.3 1120.3,461.6 1122.6,460.0 1124.9,458.5 1127.1,457.1 1129.2,455.9 1131.3,454.9 1133.3,454.1 1135.2,453.4 1137.1,452.9 1138.9,452.5 1140.8,452.2 1142.6,452.1 1144.4,452.0 1146.3,452.0 1148.2,452.1 1150.1,452.3 1152.1,452.5 1154.1,452.9 1156.2,453.4 1158.3,453.9 1160.4,454.6 1162.5,455.3 1164.7,456.1 1166.9,456.9 1169.1,457.8 1171.3,458.8 1173.6,459.8 1175.9,460.9 1178.1,462.0 1180.4,463.1 1182.8,464.2 1185.1,465.3 1187.4,466.4 1189.8,467.5 1192.2,468.6 1197.8,455.7 1195.6,454.7 1193.3,453.7 1191.1,452.7 1188.8,451.6 1186.5,450.5 1184.2,449.4 1181.8,448.3 1179.5,447.1 1177.1,446.0 1174.8,444.9 1172.4,443.9 1169.9,442.8 1167.5,441.8 1165.0,440.9 1162.5,440.0 1160.0,439.3 1157.4,438.6 1154.8,438.0 1152.2,437.5 1149.5,437.2 1146.8,437.0 1144.0,437.0 1141.3,437.2 1138.5,437.6 1135.7,438.1 1132.9,439.0 1130.2,440.0 1127.5,441.3 1124.9,442.7 1122.3,444.3 1119.9,446.0 1117.5,447.6 1115.1,449.3 1112.8,451.0 1110.5,452.7 1108.2,454.2 1106.0,455.6 1103.8,456.9 1101.7,458.0 1099.7,458.9 1097.8,459.6 1096.0,460.1 1094.2,460.4 1092.5,460.6 1090.9,460.7 1089.2,460.7 1087.5,460.6 1085.7,460.4 1083.9,460.0 1082.1,459.5 1080.1,458.9 1078.1,458.1 1076.1,457.1 1074.0,456.0 1071.8,454.8 1069.7,453.3 1067.5,451.7 1065.2,450.0 1063.0,448.1 1060.7,446.1 1058.4,443.9 1056.1,441.6 1053.8,439.3 1051.5,437.0 1049.2,434.7 1046.8,432.4 1044.4,430.2 1041.9,428.1 1039.4,426.1 1036.7,424.2 1033.9,422.6 1030.9,421.3 1027.6,420.4 1024.1,420.1 1020.5,420.6 1017.2,421.8 1014.2,423.4 1011.4,425.3 1008.8,427.5 1006.3,429.9 1003.9,432.4 1001.5,435.1 999.1,437.9 996.8,440.8 994.5,443.7 992.2,446.8 989.9,449.8 987.5,452.9 985.2,456.0 982.9,458.9 980.6,461.8 978.3,464.6 976.1,467.2 973.8,469.6 971.5,471.9 969.3,473.9 967.1,475.6 965.0,477.1 962.9,478.3 961.0,479.2 959.2,479.8 957.6,480.1 956.3,480.3 955.0,480.3 953.9,480.3 952.5,480.1 951.0,479.8 949.2,479.1 947.2,478.2 945.2,476.8 943.0,475.2 940.8,473.3 938.5,471.1 936.3,468.7 934.0,466.0 931.7,463.3 929.4,460.3 927.1,457.3 924.8,454.1 922.5,450.9 920.2,447.7 917.8,444.4 915.5,441.1 913.2,437.9 910.9,434.6 908.6,431.5 906.3,428.4 904.0,425.5 901.6,422.7 899.3,420.0 896.9,417.4 894.5,415.0 892.0,412.8 889.6,410.7 887.0,408.8 884.4,407.0 881.8,405.5 879.0,404.2 876.1,403.1 873.2,402.4 870.1,402.0 867.0,401.9 864.0,402.2 860.9,402.9 858.0,404.0 855.1,405.4 852.3,407.1 849.7,409.1 847.1,411.4 844.7,413.9 842.3,416.6 839.9,419.4 837.6,422.4 835.2,425.5 832.9,428.8 830.6,432.1 828.3,435.4 826.0,438.8 823.7,442.2 821.4,445.5 819.1,448.8 816.8,451.9 814.5,454.9 812.2,457.8 809.9,460.4 807.6,462.9 805.3,465.2 803.1,467.4 800.9,469.4 798.6,471.2 796.4,472.9 794.2,474.4 792.1,475.8 789.9,477.0 787.8,478.1 785.7,479.1 783.7,479.9 781.6,480.7 779.6,481.3 777.6,481.9 775.6,482.3 773.7,482.7 771.7,482.9 769.8,483.1 767.8,483.2 765.8,483.2 763.9,483.2 761.9,483.0 759.9,482.8 757.8,482.5 755.8,482.2 753.7,481.7 751.6,481.2 749.5,480.6 747.3,480.0 745.2,479.2 743.0,478.4 740.8,477.6 738.6,476.7 736.4,475.7 734.2,474.7 731.9,473.6 729.7,472.5 727.4,471.4 725.2,470.2 722.9,469.0 720.6,467.8 718.3,466.5 716.0,465.2 713.7,464.0 711.4,462.7 709.1,461.4 706.7,460.1 704.4,458.8 702.1,457.5 699.7,456.3 697.4,455.0 695.0,453.8 692.6,452.6 690.2,451.5 687.8,450.4 685.5,449.3 683.1,448.3 680.7,447.3 678.3,446.3 675.9,445.4 673.5,444.6 671.1,443.7 668.7,442.9 666.3,442.2 663.9,441.4 661.5,440.7 659.1,440.1 656.8,439.5 654.4,438.9 652.0,438.3 649.6,437.8 647.2,437.3 644.8,436.8 642.4,436.4 640.0,436.0 637.6,435.6 635.2,435.3 632.8,435.0 630.4,434.7 628.0,434.4 625.7,434.2 623.3,434.0 620.9,433.8 618.5,433.7 616.1,433.6 613.8,433.4 611.4,433.4 609.0,433.3 606.6,433.3 604.3,433.3 601.9,433.3 599.5,433.3 597.1,433.3 594.8,433.4 592.4,433.5 590.1,433.6 587.7,433.7 585.3,433.8 583.0,433.9 580.6,434.1 578.3,434.3 575.9,434.5 573.6,434.7 571.2,434.9 568.9,435.1 566.5,435.3 564.2,435.6 561.9,435.9 559.5,436.1 557.2,436.4 554.9,436.7 552.5,437.0 550.2,437.3 547.9,437.6 545.5,437.9 543.2,438.2 540.9,438.5 538.6,438.9 536.2,439.2 533.9,439.5 531.6,439.9 529.3,440.2 527.0,440.6 524.7,440.9 522.4,441.3 520.1,441.6 517.7,442.0 515.4,442.3 513.1,442.6 510.8,443.0 508.5,443.3 506.2,443.7 503.9,444.0" fill="#52b890"/><polygon points="506.0,458.0 508.3,457.7 510.6,457.4 512.9,457.0 515.2,456.7 517.5,456.3 519.8,456.0 522.2,455.6 524.5,455.3 526.8,454.9 529.1,454.6 531.4,454.3 533.7,453.9 536.0,453.6 538.3,453.3 540.6,452.9 542.9,452.6 545.2,452.3 547.4,452.0 549.7,451.7 552.0,451.4 554.3,451.1 556.6,450.8 558.9,450.5 561.2,450.3 563.4,450.0 565.7,449.8 568.0,449.5 570.3,449.3 572.5,449.1 574.8,448.9 577.1,448.7 579.4,448.5 581.6,448.3 583.9,448.2 586.2,448.1 588.4,447.9 590.7,447.8 592.9,447.7 595.2,447.7 597.5,447.6 599.7,447.6 602.0,447.6 604.2,447.6 606.5,447.6 608.7,447.6 611.0,447.7 613.2,447.7 615.4,447.8 617.7,447.9 619.9,448.1 622.2,448.2 624.4,448.4 626.6,448.6 628.9,448.9 631.1,449.1 633.3,449.4 635.6,449.7 637.8,450.0 640.0,450.4 642.3,450.7 644.5,451.1 646.7,451.6 649.0,452.0 651.2,452.5 653.4,453.0 655.6,453.6 657.9,454.2 660.1,454.8 662.3,455.4 664.6,456.1 666.8,456.8 669.0,457.5 671.2,458.3 673.5,459.1 675.7,459.9 677.9,460.8 680.2,461.7 682.4,462.6 684.7,463.6 686.9,464.6 689.1,465.7 691.4,466.8 693.7,467.9 695.9,469.1 698.2,470.3 700.5,471.5 702.8,472.8 705.1,474.1 707.4,475.3 709.7,476.6 712.0,477.9 714.3,479.2 716.7,480.5 719.0,481.8 721.3,483.0 723.7,484.3 726.0,485.5 728.4,486.7 730.8,487.8 733.2,488.9 735.6,490.0 738.0,491.1 740.4,492.0 742.9,492.9 745.3,493.8 747.8,494.6 750.3,495.3 752.8,495.9 755.4,496.5 757.9,496.9 760.5,497.2 763.1,497.4 765.7,497.5 768.3,497.5 770.9,497.3 773.6,497.0 776.2,496.6 778.8,496.0 781.4,495.2 784.0,494.4 786.6,493.4 789.1,492.2 791.7,490.9 794.2,489.5 796.7,487.9 799.1,486.2 801.6,484.3 804.0,482.3 806.4,480.2 808.8,477.9 811.1,475.5 813.5,472.9 815.8,470.2 818.2,467.4 820.5,464.4 822.8,461.2 825.1,458.0 827.4,454.7 829.7,451.3 832.1,447.9 834.4,444.6 836.7,441.3 839.0,438.0 841.3,434.9 843.6,431.9 845.9,429.1 848.2,426.5 850.4,424.2 852.6,422.2 854.8,420.6 856.9,419.2 858.9,418.2 860.8,417.4 862.6,416.9 864.3,416.5 865.9,416.3 867.5,416.2 869.1,416.2 870.8,416.3 872.5,416.6 874.3,417.1 876.2,417.7 878.2,418.5 880.2,419.5 882.3,420.8 884.5,422.2 886.7,423.9 888.9,425.7 891.1,427.8 893.4,430.1 895.7,432.5 898.0,435.2 900.3,438.0 902.6,440.9 904.9,444.0 907.2,447.1 909.5,450.3 911.8,453.6 914.1,456.8 916.4,460.1 918.7,463.4 921.0,466.6 923.3,469.7 925.7,472.8 928.0,475.7 930.3,478.5 932.7,481.2 935.1,483.8 937.5,486.1 940.0,488.3 942.7,490.3 945.5,492.0 948.4,493.3 951.6,494.3 955.0,494.6 958.3,494.3 961.4,493.5 964.4,492.3 967.2,490.7 969.8,488.9 972.4,486.9 974.8,484.7 977.2,482.3 979.6,479.7 982.0,477.1 984.3,474.3 986.6,471.4 989.0,468.4 991.3,465.4 993.6,462.3 995.9,459.2 998.2,456.2 1000.5,453.2 1002.8,450.3 1005.1,447.6 1007.4,445.0 1009.7,442.6 1011.9,440.5 1014.1,438.6 1016.2,437.1 1018.3,435.9 1020.2,435.1 1021.8,434.6 1023.2,434.5 1024.4,434.4 1025.6,434.5 1027.0,434.6 1028.6,435.0 1030.5,435.7 1032.5,436.7 1034.6,437.9 1036.8,439.5 1039.0,441.2 1041.2,443.2 1043.5,445.3 1045.8,447.5 1048.1,449.8 1050.4,452.1 1052.7,454.4 1055.1,456.7 1057.5,458.9 1059.8,461.1 1062.3,463.1 1064.7,465.0 1067.1,466.8 1069.6,468.4 1072.2,469.9 1074.8,471.2 1077.4,472.4 1080.1,473.4 1082.9,474.2 1085.7,474.7 1088.5,475.0 1091.4,475.0 1094.3,474.8 1097.2,474.2 1100.0,473.3 1102.8,472.2 1105.4,470.9 1108.0,469.4 1110.5,467.8 1112.9,466.2 1115.3,464.5 1117.7,462.8 1120.0,461.1 1122.3,459.5 1124.5,458.0 1126.7,456.6 1128.9,455.4 1131.0,454.3 1133.0,453.5 1135.0,452.8 1136.9,452.3 1138.8,451.9 1140.7,451.6 1142.5,451.4 1144.4,451.3 1146.3,451.3 1148.3,451.4 1150.2,451.6 1152.2,451.9 1154.3,452.2 1156.3,452.7 1158.5,453.3 1160.6,453.9 1162.7,454.6 1164.9,455.4 1167.1,456.3 1169.4,457.2 1171.6,458.2 1173.9,459.2 1176.1,460.3 1178.4,461.4 1180.7,462.5 1183.0,463.6 1185.4,464.7 1187.7,465.8 1190.1,466.9 1192.4,468.0 1197.6,456.3 1195.3,455.3 1193.0,454.3 1190.8,453.3 1188.5,452.2 1186.2,451.1 1183.9,450.0 1181.6,448.8 1179.2,447.7 1176.9,446.6 1174.5,445.5 1172.1,444.5 1169.7,443.4 1167.3,442.5 1164.8,441.5 1162.3,440.7 1159.8,439.9 1157.3,439.2 1154.7,438.7 1152.1,438.2 1149.4,437.9 1146.7,437.7 1144.0,437.7 1141.3,437.9 1138.6,438.2 1135.8,438.8 1133.1,439.6 1130.4,440.6 1127.8,441.9 1125.2,443.3 1122.6,444.8 1120.2,446.5 1117.8,448.1 1115.4,449.8 1113.1,451.5 1110.8,453.2 1108.5,454.7 1106.3,456.2 1104.1,457.5 1102.0,458.6 1099.9,459.5 1098.0,460.2 1096.2,460.8 1094.4,461.1 1092.6,461.3 1090.9,461.4 1089.2,461.4 1087.4,461.3 1085.6,461.1 1083.7,460.7 1081.8,460.2 1079.9,459.5 1077.8,458.7 1075.7,457.7 1073.6,456.6 1071.5,455.3 1069.3,453.8 1067.1,452.2 1064.9,450.4 1062.6,448.5 1060.3,446.5 1058.0,444.3 1055.7,442.0 1053.4,439.7 1051.1,437.4 1048.8,435.1 1046.4,432.8 1044.0,430.6 1041.6,428.6 1039.1,426.6 1036.4,424.8 1033.7,423.2 1030.7,421.9 1027.5,421.1 1024.1,420.8 1020.7,421.3 1017.4,422.4 1014.5,423.9 1011.7,425.8 1009.1,428.0 1006.7,430.3 1004.3,432.8 1001.9,435.4 999.5,438.2 997.2,441.1 994.9,444.1 992.6,447.1 990.3,450.2 988.0,453.2 985.6,456.3 983.3,459.2 981.0,462.1 978.7,464.9 976.5,467.5 974.2,470.0 971.9,472.2 969.7,474.3 967.5,476.1 965.3,477.6 963.3,478.8 961.3,479.7 959.5,480.4 957.8,480.8 956.4,480.9 955.0,481.0 953.7,481.0 952.3,480.8 950.7,480.4 948.9,479.7 946.9,478.7 944.8,477.3 942.6,475.6 940.4,473.7 938.1,471.4 935.9,469.0 933.6,466.4 931.3,463.6 929.0,460.6 926.7,457.6 924.4,454.4 922.1,451.2 919.7,447.9 917.4,444.7 915.1,441.4 912.8,438.2 910.5,435.0 908.2,431.8 905.9,428.8 903.5,425.8 901.2,423.0 898.9,420.3 896.5,417.8 894.1,415.5 891.7,413.2 889.2,411.2 886.7,409.3 884.1,407.6 881.5,406.1 878.8,404.8 875.9,403.8 873.0,403.1 870.1,402.7 867.1,402.6 864.1,402.9 861.1,403.6 858.2,404.6 855.4,406.0 852.7,407.6 850.0,409.6 847.5,411.8 845.1,414.3 842.7,416.9 840.3,419.8 838.0,422.7 835.6,425.9 833.3,429.1 831.0,432.4 828.7,435.7 826.4,439.1 824.1,442.5 821.8,445.8 819.5,449.1 817.2,452.2 814.9,455.2 812.6,458.1 810.3,460.8 808.0,463.3 805.7,465.6 803.5,467.8 801.2,469.8 799.0,471.6 796.8,473.3 794.6,474.9 792.4,476.3 790.3,477.5 788.1,478.7 786.0,479.7 783.9,480.5 781.9,481.3 779.8,482.0 777.8,482.5 775.8,483.0 773.8,483.3 771.8,483.6 769.8,483.8 767.8,483.9 765.8,483.9 763.8,483.9 761.8,483.7 759.8,483.5 757.7,483.2 755.6,482.8 753.5,482.4 751.4,481.9 749.3,481.3 747.1,480.6 745.0,479.9 742.8,479.1 740.6,478.2 738.4,477.3 736.1,476.3 733.9,475.3 731.6,474.2 729.4,473.1 727.1,472.0 724.9,470.8 722.6,469.6 720.3,468.3 718.0,467.1 715.7,465.8 713.4,464.5 711.1,463.2 708.8,461.9 706.4,460.7 704.1,459.4 701.8,458.1 699.4,456.9 697.1,455.6 694.7,454.4 692.3,453.2 690.0,452.1 687.6,451.0 685.2,449.9 682.8,448.9 680.4,447.9 678.1,447.0 675.7,446.1 673.3,445.2 670.9,444.4 668.5,443.6 666.1,442.8 663.8,442.1 661.4,441.4 659.0,440.7 656.6,440.1 654.2,439.5 651.8,439.0 649.4,438.5 647.0,438.0 644.7,437.5 642.3,437.1 639.9,436.7 637.5,436.3 635.1,436.0 632.7,435.7 630.4,435.4 628.0,435.1 625.6,434.9 623.2,434.7 620.8,434.5 618.5,434.4 616.1,434.3 613.7,434.1 611.4,434.1 609.0,434.0 606.6,434.0 604.3,434.0 601.9,434.0 599.5,434.0 597.2,434.0 594.8,434.1 592.4,434.2 590.1,434.3 587.7,434.4 585.4,434.5 583.0,434.6 580.7,434.8 578.3,435.0 576.0,435.2 573.6,435.4 571.3,435.6 569.0,435.8 566.6,436.0 564.3,436.3 561.9,436.5 559.6,436.8 557.3,437.1 554.9,437.4 552.6,437.7 550.3,438.0 548.0,438.3 545.6,438.6 543.3,438.9 541.0,439.2 538.7,439.6 536.3,439.9 534.0,440.2 531.7,440.6 529.4,440.9 527.1,441.3 524.8,441.6 522.5,442.0 520.2,442.3 517.8,442.6 515.5,443.0 513.2,443.3 510.9,443.7 508.6,444.0 506.3,444.3 504.0,444.7" fill="#b4bc62"/><polygon points="505.9,457.4 508.2,457.0 510.5,456.7 512.8,456.3 515.1,456.0 517.4,455.6 519.7,455.3 522.1,455.0 524.4,454.6 526.7,454.3 529.0,453.9 531.3,453.6 533.6,453.2 535.9,452.9 538.2,452.6 540.5,452.2 542.8,451.9 545.1,451.6 547.4,451.3 549.6,451.0 551.9,450.7 554.2,450.4 556.5,450.1 558.8,449.8 561.1,449.6 563.4,449.3 565.6,449.1 567.9,448.8 570.2,448.6 572.5,448.4 574.8,448.2 577.0,448.0 579.3,447.8 581.6,447.6 583.8,447.5 586.1,447.4 588.4,447.2 590.7,447.1 592.9,447.0 595.2,447.0 597.4,446.9 599.7,446.9 602.0,446.9 604.2,446.9 606.5,446.9 608.7,446.9 611.0,447.0 613.2,447.0 615.5,447.1 617.7,447.2 620.0,447.4 622.2,447.5 624.5,447.7 626.7,447.9 629.0,448.2 631.2,448.4 633.4,448.7 635.7,449.0 637.9,449.3 640.2,449.7 642.4,450.1 644.6,450.5 646.9,450.9 649.1,451.4 651.3,451.9 653.6,452.4 655.8,452.9 658.0,453.5 660.3,454.1 662.5,454.8 664.8,455.4 667.0,456.1 669.2,456.9 671.5,457.7 673.7,458.5 676.0,459.3 678.2,460.2 680.4,461.1 682.7,462.0 684.9,463.0 687.2,464.1 689.4,465.1 691.7,466.2 694.0,467.4 696.2,468.5 698.5,469.8 700.8,471.0 703.1,472.2 705.4,473.5 707.7,474.8 710.0,476.1 712.3,477.4 714.6,478.6 717.0,479.9 719.3,481.2 721.6,482.5 724.0,483.7 726.3,484.9 728.7,486.1 731.1,487.2 733.5,488.3 735.8,489.4 738.2,490.4 740.7,491.4 743.1,492.3 745.5,493.2 748.0,493.9 750.5,494.6 753.0,495.2 755.5,495.8 758.0,496.2 760.6,496.5 763.1,496.7 765.7,496.8 768.3,496.8 770.9,496.6 773.5,496.3 776.1,495.9 778.7,495.3 781.2,494.6 783.8,493.7 786.3,492.7 788.9,491.6 791.4,490.3 793.9,488.9 796.3,487.3 798.8,485.7 801.2,483.8 803.6,481.8 806.0,479.7 808.4,477.5 810.7,475.1 813.1,472.5 815.4,469.9 817.8,467.0 820.1,464.0 822.4,460.9 824.7,457.7 827.0,454.4 829.3,451.0 831.6,447.7 834.0,444.3 836.3,441.0 838.6,437.7 840.9,434.6 843.2,431.6 845.5,428.8 847.8,426.2 850.0,423.9 852.2,421.8 854.4,420.1 856.5,418.7 858.6,417.7 860.5,416.8 862.4,416.2 864.1,415.8 865.8,415.6 867.5,415.5 869.2,415.5 870.9,415.7 872.7,416.0 874.5,416.4 876.5,417.1 878.5,417.9 880.6,419.0 882.7,420.3 884.9,421.7 887.1,423.4 889.3,425.3 891.5,427.4 893.8,429.7 896.1,432.2 898.4,434.8 900.7,437.6 903.0,440.6 905.3,443.7 907.6,446.8 909.9,450.0 912.2,453.3 914.5,456.6 916.8,459.8 919.1,463.1 921.4,466.3 923.8,469.4 926.1,472.4 928.4,475.4 930.7,478.2 933.1,480.8 935.5,483.3 937.9,485.7 940.4,487.8 943.0,489.7 945.7,491.4 948.6,492.7 951.7,493.6 955.0,493.9 958.2,493.6 961.2,492.8 964.1,491.7 966.9,490.1 969.5,488.4 972.0,486.4 974.5,484.2 976.9,481.9 979.2,479.4 981.6,476.7 983.9,473.9 986.2,471.0 988.6,468.1 990.9,465.0 993.2,462.0 995.5,458.9 997.8,455.9 1000.1,452.9 1002.4,450.0 1004.7,447.3 1007.0,444.7 1009.3,442.3 1011.5,440.1 1013.7,438.2 1015.9,436.6 1017.9,435.4 1019.9,434.5 1021.6,434.0 1023.1,433.8 1024.4,433.7 1025.7,433.8 1027.2,434.0 1028.9,434.4 1030.8,435.1 1032.8,436.1 1034.9,437.5 1037.1,439.0 1039.4,440.8 1041.6,442.8 1043.9,444.9 1046.2,447.1 1048.5,449.4 1050.8,451.7 1053.1,454.0 1055.5,456.3 1057.8,458.5 1060.2,460.6 1062.6,462.6 1065.0,464.5 1067.5,466.2 1070.0,467.8 1072.5,469.3 1075.0,470.6 1077.6,471.8 1080.3,472.7 1083.0,473.5 1085.8,474.0 1088.6,474.3 1091.4,474.3 1094.2,474.1 1097.0,473.5 1099.8,472.7 1102.5,471.6 1105.2,470.3 1107.7,468.9 1110.2,467.3 1112.6,465.7 1115.0,464.0 1117.3,462.3 1119.6,460.6 1121.9,459.0 1124.2,457.5 1126.4,456.1 1128.6,454.8 1130.7,453.7 1132.7,452.9 1134.7,452.2 1136.7,451.6 1138.6,451.2 1140.5,450.9 1142.5,450.7 1144.4,450.6 1146.3,450.6 1148.3,450.7 1150.3,450.9 1152.4,451.2 1154.4,451.6 1156.5,452.1 1158.7,452.6 1160.8,453.3 1163.0,454.0 1165.2,454.8 1167.4,455.7 1169.6,456.6 1171.9,457.6 1174.1,458.6 1176.4,459.7 1178.7,460.8 1181.0,461.9 1183.3,463.0 1185.7,464.1 1188.0,465.2 1190.4,466.3 1192.7,467.4 1197.3,456.9 1195.0,455.9 1192.8,454.9 1190.5,453.8 1188.2,452.8 1185.9,451.7 1183.6,450.6 1181.3,449.4 1178.9,448.3 1176.6,447.2 1174.2,446.1 1171.8,445.1 1169.4,444.1 1167.0,443.1 1164.6,442.2 1162.1,441.3 1159.6,440.6 1157.1,439.9 1154.6,439.3 1152.0,438.9 1149.4,438.6 1146.7,438.4 1144.1,438.4 1141.4,438.6 1138.7,438.9 1136.0,439.5 1133.3,440.3 1130.7,441.3 1128.0,442.5 1125.5,443.9 1123.0,445.4 1120.5,447.0 1118.1,448.7 1115.8,450.3 1113.5,452.0 1111.2,453.7 1108.9,455.2 1106.7,456.7 1104.5,458.0 1102.3,459.2 1100.2,460.1 1098.2,460.9 1096.3,461.4 1094.5,461.8 1092.7,462.0 1090.9,462.1 1089.1,462.1 1087.3,462.0 1085.5,461.7 1083.6,461.3 1081.6,460.8 1079.6,460.1 1077.5,459.3 1075.4,458.2 1073.3,457.1 1071.1,455.8 1068.9,454.3 1066.7,452.6 1064.5,450.9 1062.2,448.9 1059.9,446.9 1057.7,444.7 1055.4,442.4 1053.0,440.1 1050.7,437.8 1048.4,435.5 1046.0,433.3 1043.6,431.1 1041.2,429.0 1038.7,427.1 1036.1,425.4 1033.4,423.8 1030.5,422.6 1027.4,421.8 1024.1,421.5 1020.8,422.0 1017.6,423.0 1014.7,424.5 1012.1,426.3 1009.5,428.4 1007.0,430.7 1004.6,433.2 1002.3,435.8 999.9,438.6 997.6,441.4 995.3,444.4 993.0,447.4 990.7,450.5 988.4,453.5 986.1,456.6 983.7,459.6 981.4,462.5 979.2,465.3 976.9,467.9 974.6,470.4 972.3,472.6 970.1,474.7 967.9,476.5 965.7,478.1 963.6,479.3 961.6,480.3 959.7,481.0 958.0,481.4 956.5,481.6 955.0,481.7 953.6,481.6 952.1,481.4 950.4,481.0 948.5,480.2 946.5,479.1 944.4,477.7 942.2,476.0 940.0,474.1 937.7,471.8 935.5,469.4 933.2,466.7 930.9,463.9 928.6,460.9 926.3,457.9 924.0,454.7 921.6,451.5 919.3,448.2 917.0,445.0 914.7,441.7 912.4,438.5 910.1,435.3 907.8,432.1 905.5,429.1 903.1,426.2 900.8,423.4 898.5,420.7 896.1,418.2 893.7,415.9 891.3,413.7 888.9,411.7 886.4,409.8 883.8,408.2 881.2,406.7 878.5,405.5 875.8,404.5 872.9,403.7 870.0,403.3 867.1,403.3 864.2,403.6 861.2,404.2 858.4,405.2 855.6,406.6 853.0,408.2 850.4,410.1 847.9,412.3 845.4,414.7 843.1,417.3 840.7,420.1 838.4,423.1 836.1,426.2 833.7,429.4 831.4,432.7 829.1,436.0 826.8,439.4 824.5,442.8 822.2,446.1 819.9,449.4 817.6,452.5 815.3,455.6 813.0,458.4 810.7,461.1 808.4,463.6 806.1,466.0 803.9,468.2 801.6,470.2 799.4,472.1 797.2,473.8 795.0,475.4 792.8,476.8 790.6,478.1 788.5,479.2 786.3,480.2 784.2,481.1 782.1,481.9 780.1,482.6 778.0,483.2 776.0,483.6 773.9,484.0 771.9,484.3 769.9,484.5 767.9,484.6 765.8,484.6 763.8,484.6 761.7,484.4 759.7,484.2 757.6,483.9 755.5,483.5 753.4,483.1 751.2,482.5 749.1,481.9 746.9,481.2 744.7,480.5 742.5,479.7 740.3,478.8 738.1,477.9 735.9,476.9 733.6,475.9 731.4,474.8 729.1,473.7 726.8,472.5 724.6,471.3 722.3,470.1 720.0,468.9 717.7,467.6 715.4,466.4 713.1,465.1 710.8,463.8 708.5,462.5 706.1,461.2 703.8,459.9 701.5,458.7 699.1,457.4 696.8,456.2 694.4,455.0 692.1,453.8 689.7,452.7 687.3,451.6 684.9,450.5 682.6,449.5 680.2,448.5 677.8,447.6 675.4,446.7 673.1,445.8 670.7,445.0 668.3,444.2 665.9,443.5 663.6,442.7 661.2,442.0 658.8,441.4 656.4,440.8 654.0,440.2 651.7,439.7 649.3,439.1 646.9,438.6 644.5,438.2 642.2,437.8 639.8,437.4 637.4,437.0 635.0,436.7 632.7,436.4 630.3,436.1 627.9,435.8 625.5,435.6 623.2,435.4 620.8,435.2 618.4,435.1 616.1,435.0 613.7,434.8 611.3,434.8 609.0,434.7 606.6,434.7 604.2,434.7 601.9,434.7 599.5,434.7 597.2,434.7 594.8,434.8 592.5,434.9 590.1,435.0 587.8,435.1 585.4,435.2 583.1,435.3 580.7,435.5 578.4,435.7 576.0,435.9 573.7,436.1 571.4,436.3 569.0,436.5 566.7,436.7 564.4,437.0 562.0,437.2 559.7,437.5 557.4,437.8 555.0,438.1 552.7,438.4 550.4,438.7 548.0,439.0 545.7,439.3 543.4,439.6 541.1,439.9 538.8,440.3 536.4,440.6 534.1,440.9 531.8,441.3 529.5,441.6 527.2,441.9 524.9,442.3 522.6,442.6 520.3,443.0 517.9,443.3 515.6,443.7 513.3,444.0 511.0,444.4 508.7,444.7 506.4,445.0 504.1,445.4" fill="#eab44c"/><polygon points="505.8,456.6 508.1,456.2 510.4,455.9 512.7,455.5 515.0,455.2 517.3,454.9 519.6,454.5 521.9,454.2 524.2,453.8 526.5,453.5 528.9,453.1 531.2,452.8 533.5,452.5 535.8,452.1 538.1,451.8 540.4,451.5 542.7,451.1 545.0,450.8 547.2,450.5 549.5,450.2 551.8,449.9 554.1,449.6 556.4,449.3 558.7,449.0 561.0,448.8 563.3,448.5 565.6,448.3 567.8,448.0 570.1,447.8 572.4,447.6 574.7,447.4 577.0,447.2 579.2,447.0 581.5,446.8 583.8,446.7 586.1,446.6 588.3,446.4 590.6,446.3 592.9,446.2 595.2,446.2 597.4,446.1 599.7,446.1 602.0,446.1 604.2,446.1 606.5,446.1 608.7,446.1 611.0,446.2 613.3,446.2 615.5,446.3 617.8,446.4 620.0,446.6 622.3,446.7 624.5,446.9 626.8,447.1 629.0,447.4 631.3,447.6 633.5,447.9 635.8,448.2 638.0,448.5 640.3,448.9 642.5,449.3 644.8,449.7 647.0,450.1 649.3,450.6 651.5,451.1 653.8,451.6 656.0,452.2 658.3,452.8 660.5,453.4 662.7,454.0 665.0,454.7 667.2,455.4 669.5,456.2 671.7,456.9 674.0,457.8 676.2,458.6 678.5,459.5 680.7,460.4 683.0,461.4 685.2,462.4 687.5,463.4 689.8,464.5 692.0,465.6 694.3,466.7 696.6,467.9 698.9,469.1 701.1,470.3 703.4,471.6 705.7,472.9 708.0,474.1 710.4,475.4 712.7,476.7 715.0,478.0 717.3,479.3 719.6,480.5 722.0,481.8 724.3,483.0 726.7,484.2 729.0,485.4 731.4,486.6 733.8,487.7 736.1,488.7 738.5,489.7 740.9,490.7 743.3,491.6 745.8,492.4 748.2,493.2 750.7,493.9 753.1,494.5 755.6,495.0 758.1,495.4 760.6,495.7 763.2,495.9 765.7,496.0 768.3,496.0 770.8,495.8 773.4,495.5 775.9,495.1 778.5,494.5 781.0,493.8 783.5,493.0 786.1,492.0 788.6,490.9 791.0,489.7 793.5,488.3 795.9,486.7 798.4,485.1 800.8,483.3 803.2,481.3 805.6,479.2 807.9,477.0 810.3,474.6 812.6,472.1 815.0,469.5 817.3,466.6 819.6,463.7 821.9,460.6 824.3,457.4 826.6,454.1 828.9,450.7 831.2,447.3 833.5,444.0 835.8,440.6 838.1,437.4 840.4,434.3 842.7,431.2 845.0,428.4 847.3,425.8 849.6,423.4 851.8,421.4 854.0,419.6 856.1,418.2 858.2,417.0 860.2,416.2 862.1,415.5 863.9,415.1 865.7,414.8 867.5,414.7 869.3,414.7 871.0,414.9 872.9,415.2 874.8,415.7 876.8,416.4 878.8,417.3 880.9,418.4 883.1,419.7 885.3,421.2 887.5,422.9 889.7,424.9 892.0,427.0 894.3,429.3 896.6,431.8 898.8,434.5 901.1,437.3 903.4,440.2 905.7,443.3 908.1,446.5 910.4,449.7 912.7,452.9 915.0,456.2 917.3,459.5 919.6,462.7 921.9,465.9 924.2,469.0 926.5,472.1 928.9,475.0 931.2,477.7 933.5,480.4 935.9,482.9 938.3,485.1 940.8,487.2 943.4,489.1 946.0,490.7 948.9,492.0 951.9,492.8 955.0,493.1 958.1,492.8 961.0,492.1 963.8,491.0 966.5,489.5 969.1,487.8 971.6,485.8 974.0,483.7 976.4,481.4 978.8,478.9 981.1,476.3 983.4,473.5 985.8,470.7 988.1,467.7 990.4,464.7 992.7,461.6 995.0,458.6 997.3,455.5 999.6,452.5 1001.9,449.7 1004.2,446.9 1006.5,444.3 1008.8,441.8 1011.1,439.6 1013.3,437.7 1015.5,436.1 1017.6,434.8 1019.5,433.9 1021.3,433.3 1022.9,433.0 1024.3,432.9 1025.8,433.0 1027.4,433.2 1029.2,433.7 1031.1,434.5 1033.2,435.6 1035.4,436.9 1037.6,438.5 1039.8,440.3 1042.1,442.3 1044.3,444.4 1046.6,446.6 1048.9,448.9 1051.3,451.2 1053.6,453.5 1055.9,455.8 1058.3,458.0 1060.6,460.1 1063.0,462.1 1065.4,463.9 1067.9,465.6 1070.3,467.2 1072.8,468.7 1075.3,469.9 1077.9,471.1 1080.5,472.0 1083.2,472.7 1085.9,473.2 1088.6,473.5 1091.4,473.5 1094.1,473.3 1096.9,472.8 1099.6,472.0 1102.2,470.9 1104.8,469.6 1107.3,468.2 1109.8,466.7 1112.2,465.1 1114.6,463.4 1116.9,461.7 1119.2,460.1 1121.5,458.5 1123.8,456.9 1126.0,455.5 1128.2,454.2 1130.3,453.1 1132.4,452.2 1134.5,451.4 1136.5,450.9 1138.4,450.4 1140.4,450.1 1142.4,449.9 1144.4,449.8 1146.4,449.8 1148.4,449.9 1150.4,450.1 1152.5,450.4 1154.6,450.8 1156.7,451.3 1158.9,451.9 1161.1,452.6 1163.2,453.3 1165.5,454.1 1167.7,455.0 1169.9,455.9 1172.2,456.9 1174.5,458.0 1176.7,459.0 1179.0,460.1 1181.3,461.2 1183.6,462.3 1186.0,463.4 1188.3,464.6 1190.7,465.6 1193.0,466.7 1197.0,457.6 1194.7,456.6 1192.5,455.6 1190.2,454.5 1187.9,453.4 1185.6,452.3 1183.3,451.2 1181.0,450.1 1178.6,449.0 1176.3,447.9 1173.9,446.8 1171.5,445.8 1169.2,444.8 1166.8,443.8 1164.3,442.9 1161.9,442.1 1159.4,441.3 1156.9,440.7 1154.4,440.1 1151.9,439.7 1149.3,439.4 1146.7,439.2 1144.1,439.2 1141.5,439.4 1138.8,439.7 1136.2,440.3 1133.5,441.0 1130.9,442.0 1128.3,443.1 1125.8,444.5 1123.3,446.0 1120.9,447.6 1118.5,449.2 1116.2,450.9 1113.9,452.6 1111.6,454.2 1109.3,455.8 1107.0,457.3 1104.8,458.6 1102.7,459.8 1100.6,460.8 1098.5,461.6 1096.6,462.1 1094.7,462.6 1092.8,462.8 1091.0,462.9 1089.1,462.9 1087.2,462.8 1085.3,462.5 1083.3,462.1 1081.3,461.5 1079.3,460.8 1077.2,459.9 1075.1,458.9 1072.9,457.7 1070.7,456.3 1068.5,454.8 1066.3,453.2 1064.0,451.4 1061.8,449.4 1059.5,447.3 1057.2,445.1 1054.9,442.9 1052.6,440.6 1050.3,438.3 1047.9,436.0 1045.6,433.8 1043.2,431.6 1040.8,429.6 1038.3,427.7 1035.8,426.0 1033.1,424.5 1030.3,423.3 1027.3,422.6 1024.1,422.3 1020.9,422.7 1017.9,423.7 1015.1,425.2 1012.4,426.9 1009.9,429.0 1007.5,431.2 1005.1,433.6 1002.7,436.2 1000.4,439.0 998.1,441.8 995.8,444.8 993.4,447.8 991.1,450.8 988.8,453.9 986.5,456.9 984.2,459.9 981.9,462.8 979.6,465.6 977.3,468.3 975.0,470.8 972.8,473.1 970.5,475.2 968.3,477.0 966.1,478.6 964.0,479.9 961.9,481.0 960.0,481.7 958.2,482.2 956.6,482.4 955.0,482.5 953.5,482.4 951.9,482.2 950.1,481.7 948.2,480.8 946.1,479.7 944.0,478.3 941.8,476.5 939.5,474.5 937.3,472.2 935.0,469.7 932.7,467.1 930.4,464.2 928.1,461.3 925.8,458.2 923.5,455.0 921.2,451.8 918.9,448.6 916.6,445.3 914.3,442.0 911.9,438.8 909.6,435.6 907.3,432.5 905.0,429.5 902.7,426.6 900.3,423.8 898.0,421.2 895.7,418.7 893.3,416.4 890.9,414.2 888.5,412.2 886.0,410.4 883.5,408.8 880.9,407.4 878.3,406.2 875.6,405.2 872.8,404.5 870.0,404.1 867.1,404.1 864.3,404.4 861.4,405.0 858.7,406.0 856.0,407.2 853.3,408.8 850.8,410.7 848.3,412.8 845.9,415.2 843.5,417.7 841.2,420.5 838.8,423.4 836.5,426.5 834.2,429.7 831.9,433.0 829.6,436.3 827.3,439.7 825.0,443.1 822.7,446.4 820.4,449.7 818.1,452.9 815.8,455.9 813.5,458.8 811.2,461.5 808.9,464.0 806.6,466.4 804.3,468.6 802.1,470.7 799.8,472.6 797.6,474.3 795.4,475.9 793.2,477.4 791.0,478.7 788.8,479.9 786.7,480.9 784.5,481.8 782.4,482.6 780.3,483.3 778.2,483.9 776.1,484.4 774.1,484.8 772.0,485.1 769.9,485.3 767.9,485.4 765.8,485.4 763.8,485.4 761.7,485.2 759.6,485.0 757.5,484.7 755.3,484.3 753.2,483.8 751.0,483.3 748.8,482.6 746.7,482.0 744.5,481.2 742.2,480.4 740.0,479.5 737.8,478.6 735.5,477.6 733.3,476.5 731.0,475.5 728.8,474.3 726.5,473.2 724.2,472.0 721.9,470.8 719.6,469.5 717.3,468.3 715.0,467.0 712.7,465.7 710.4,464.4 708.1,463.1 705.8,461.9 703.5,460.6 701.1,459.3 698.8,458.1 696.4,456.9 694.1,455.7 691.7,454.5 689.4,453.4 687.0,452.3 684.7,451.2 682.3,450.2 679.9,449.2 677.6,448.3 675.2,447.4 672.8,446.5 670.5,445.7 668.1,444.9 665.7,444.2 663.3,443.5 661.0,442.8 658.6,442.2 656.2,441.5 653.9,441.0 651.5,440.4 649.1,439.9 646.8,439.4 644.4,439.0 642.0,438.6 639.7,438.2 637.3,437.8 634.9,437.5 632.6,437.2 630.2,436.9 627.8,436.6 625.5,436.4 623.1,436.2 620.7,436.0 618.4,435.9 616.0,435.7 613.7,435.6 611.3,435.6 609.0,435.5 606.6,435.5 604.2,435.5 601.9,435.5 599.5,435.5 597.2,435.5 594.8,435.6 592.5,435.7 590.2,435.8 587.8,435.9 585.5,436.0 583.1,436.1 580.8,436.3 578.4,436.5 576.1,436.7 573.8,436.9 571.4,437.1 569.1,437.3 566.8,437.5 564.4,437.8 562.1,438.0 559.8,438.3 557.5,438.6 555.1,438.9 552.8,439.1 550.5,439.4 548.2,439.8 545.8,440.1 543.5,440.4 541.2,440.7 538.9,441.0 536.6,441.4 534.2,441.7 531.9,442.0 529.6,442.4 527.3,442.7 525.0,443.1 522.7,443.4 520.4,443.8 518.1,444.1 515.8,444.5 513.5,444.8 511.2,445.1 508.8,445.5 506.5,445.8 504.2,446.2" fill="#fbbd3c"/><polygon points="505.6,455.6 507.9,455.2 510.2,454.9 512.5,454.6 514.9,454.2 517.2,453.9 519.5,453.5 521.8,453.2 524.1,452.8 526.4,452.5 528.7,452.2 531.0,451.8 533.3,451.5 535.6,451.1 537.9,450.8 540.2,450.5 542.5,450.1 544.8,449.8 547.1,449.5 549.4,449.2 551.7,448.9 554.0,448.6 556.3,448.3 558.6,448.1 560.9,447.8 563.2,447.5 565.5,447.3 567.7,447.0 570.0,446.8 572.3,446.6 574.6,446.4 576.9,446.2 579.2,446.0 581.5,445.9 583.7,445.7 586.0,445.6 588.3,445.4 590.6,445.3 592.8,445.2 595.1,445.2 597.4,445.1 599.7,445.1 601.9,445.1 604.2,445.1 606.5,445.1 608.8,445.1 611.0,445.2 613.3,445.2 615.6,445.3 617.8,445.4 620.1,445.6 622.4,445.8 624.6,445.9 626.9,446.1 629.1,446.4 631.4,446.6 633.7,446.9 635.9,447.2 638.2,447.6 640.4,447.9 642.7,448.3 645.0,448.7 647.2,449.2 649.5,449.6 651.7,450.1 654.0,450.7 656.3,451.2 658.5,451.8 660.8,452.4 663.0,453.1 665.3,453.8 667.5,454.5 669.8,455.3 672.1,456.0 674.3,456.9 676.6,457.7 678.8,458.6 681.1,459.5 683.4,460.5 685.6,461.5 687.9,462.5 690.2,463.6 692.4,464.7 694.7,465.9 697.0,467.1 699.3,468.3 701.6,469.5 703.9,470.8 706.2,472.1 708.5,473.4 710.8,474.6 713.1,475.9 715.4,477.2 717.7,478.5 720.1,479.7 722.4,481.0 724.7,482.2 727.1,483.4 729.4,484.6 731.8,485.7 734.1,486.8 736.5,487.8 738.9,488.8 741.3,489.8 743.7,490.7 746.1,491.5 748.5,492.2 750.9,492.9 753.3,493.5 755.8,494.0 758.3,494.4 760.7,494.7 763.2,494.9 765.7,495.0 768.2,495.0 770.7,494.8 773.2,494.6 775.8,494.1 778.3,493.6 780.8,492.9 783.2,492.1 785.7,491.1 788.2,490.1 790.6,488.8 793.1,487.5 795.5,486.0 797.9,484.3 800.3,482.6 802.7,480.7 805.0,478.6 807.4,476.4 809.7,474.1 812.1,471.6 814.4,468.9 816.7,466.2 819.0,463.2 821.4,460.1 823.7,456.9 826.0,453.6 828.3,450.3 830.6,446.9 832.9,443.6 835.2,440.2 837.5,437.0 839.8,433.8 842.1,430.8 844.4,427.9 846.7,425.3 849.0,422.9 851.2,420.8 853.5,419.0 855.6,417.5 857.7,416.3 859.8,415.3 861.8,414.6 863.7,414.1 865.6,413.8 867.5,413.7 869.3,413.7 871.2,413.9 873.1,414.3 875.1,414.8 877.2,415.5 879.3,416.5 881.4,417.6 883.6,419.0 885.8,420.6 888.0,422.3 890.3,424.3 892.6,426.4 894.8,428.8 897.1,431.3 899.4,434.0 901.7,436.8 904.0,439.8 906.3,442.9 908.6,446.1 910.9,449.3 913.3,452.5 915.6,455.8 917.9,459.1 920.2,462.3 922.5,465.5 924.8,468.6 927.1,471.6 929.4,474.5 931.8,477.2 934.1,479.8 936.5,482.3 938.9,484.5 941.3,486.5 943.8,488.3 946.4,489.8 949.2,491.0 952.0,491.8 955.0,492.1 957.9,491.9 960.8,491.2 963.5,490.1 966.1,488.7 968.6,487.0 971.1,485.2 973.5,483.1 975.9,480.8 978.2,478.4 980.5,475.8 982.9,473.0 985.2,470.2 987.5,467.2 989.8,464.2 992.1,461.2 994.4,458.1 996.7,455.1 999.0,452.1 1001.3,449.2 1003.6,446.4 1005.9,443.8 1008.2,441.3 1010.5,439.1 1012.7,437.1 1014.9,435.4 1017.1,434.1 1019.1,433.1 1021.0,432.4 1022.7,432.0 1024.3,431.9 1025.9,432.0 1027.7,432.3 1029.6,432.8 1031.6,433.7 1033.7,434.8 1035.9,436.2 1038.1,437.9 1040.3,439.7 1042.6,441.7 1044.9,443.8 1047.2,446.1 1049.5,448.3 1051.8,450.6 1054.1,452.9 1056.5,455.2 1058.8,457.4 1061.2,459.4 1063.5,461.4 1065.9,463.2 1068.3,464.9 1070.8,466.4 1073.2,467.8 1075.7,469.1 1078.2,470.2 1080.8,471.1 1083.4,471.8 1086.0,472.2 1088.6,472.5 1091.3,472.5 1094.0,472.3 1096.7,471.8 1099.3,471.0 1101.9,470.0 1104.4,468.8 1106.9,467.4 1109.3,465.9 1111.7,464.3 1114.1,462.7 1116.4,461.0 1118.7,459.4 1121.0,457.7 1123.3,456.2 1125.5,454.7 1127.7,453.4 1129.9,452.3 1132.0,451.3 1134.1,450.6 1136.2,449.9 1138.2,449.5 1140.3,449.1 1142.3,448.9 1144.3,448.8 1146.4,448.8 1148.5,448.9 1150.6,449.1 1152.7,449.4 1154.8,449.9 1157.0,450.4 1159.2,451.0 1161.4,451.7 1163.6,452.4 1165.8,453.2 1168.0,454.1 1170.3,455.1 1172.6,456.1 1174.8,457.1 1177.1,458.2 1179.4,459.3 1181.7,460.4 1184.0,461.5 1186.4,462.6 1188.7,463.7 1191.0,464.8 1193.4,465.8 1196.6,458.4 1194.3,457.4 1192.1,456.4 1189.8,455.4 1187.5,454.3 1185.2,453.2 1182.9,452.1 1180.6,450.9 1178.2,449.8 1175.9,448.8 1173.5,447.7 1171.2,446.6 1168.8,445.7 1166.4,444.7 1164.0,443.8 1161.6,443.0 1159.2,442.3 1156.7,441.6 1154.2,441.1 1151.7,440.7 1149.2,440.4 1146.7,440.2 1144.1,440.2 1141.5,440.3 1139.0,440.7 1136.4,441.2 1133.8,441.9 1131.3,442.9 1128.7,444.0 1126.2,445.3 1123.8,446.8 1121.4,448.3 1119.0,450.0 1116.7,451.6 1114.4,453.3 1112.1,454.9 1109.8,456.5 1107.5,458.0 1105.3,459.4 1103.1,460.6 1101.0,461.6 1098.9,462.4 1096.9,463.1 1094.9,463.5 1092.9,463.8 1091.0,463.9 1089.0,463.9 1087.1,463.8 1085.1,463.5 1083.1,463.0 1081.0,462.4 1078.9,461.7 1076.8,460.7 1074.6,459.7 1072.4,458.4 1070.2,457.0 1068.0,455.5 1065.7,453.8 1063.5,452.0 1061.2,450.0 1058.9,447.9 1056.6,445.7 1054.3,443.5 1052.0,441.2 1049.7,438.9 1047.4,436.6 1045.0,434.4 1042.7,432.3 1040.3,430.3 1037.8,428.4 1035.3,426.8 1032.7,425.4 1030.0,424.3 1027.1,423.5 1024.1,423.3 1021.1,423.7 1018.2,424.6 1015.5,426.0 1012.9,427.7 1010.4,429.6 1008.0,431.8 1005.7,434.2 1003.3,436.8 1001.0,439.5 998.7,442.3 996.3,445.2 994.0,448.2 991.7,451.3 989.4,454.3 987.1,457.4 984.8,460.4 982.5,463.3 980.2,466.1 977.9,468.8 975.6,471.3 973.3,473.6 971.1,475.7 968.8,477.6 966.6,479.3 964.5,480.7 962.4,481.8 960.4,482.6 958.5,483.1 956.7,483.4 955.0,483.5 953.4,483.4 951.6,483.1 949.7,482.5 947.7,481.6 945.6,480.4 943.4,478.9 941.2,477.1 939.0,475.1 936.7,472.8 934.4,470.2 932.1,467.5 929.8,464.7 927.5,461.7 925.2,458.6 922.9,455.5 920.6,452.2 918.3,449.0 916.0,445.7 913.7,442.4 911.4,439.2 909.1,436.0 906.7,432.9 904.4,429.9 902.1,427.1 899.8,424.3 897.4,421.7 895.1,419.3 892.7,417.0 890.3,414.9 887.9,412.9 885.5,411.2 883.0,409.6 880.5,408.2 877.9,407.1 875.3,406.2 872.6,405.5 869.9,405.1 867.2,405.1 864.4,405.4 861.7,406.0 859.0,406.9 856.4,408.1 853.8,409.6 851.3,411.4 848.9,413.4 846.5,415.7 844.1,418.3 841.7,421.0 839.4,423.9 837.1,427.0 834.8,430.1 832.5,433.4 830.2,436.7 827.9,440.1 825.6,443.5 823.3,446.8 820.9,450.1 818.6,453.3 816.3,456.3 814.0,459.3 811.7,462.0 809.4,464.5 807.2,466.9 804.9,469.2 802.6,471.3 800.4,473.2 798.1,475.0 795.9,476.6 793.7,478.1 791.4,479.4 789.2,480.6 787.1,481.7 784.9,482.7 782.7,483.5 780.6,484.2 778.5,484.9 776.4,485.4 774.2,485.8 772.1,486.1 770.0,486.3 767.9,486.4 765.8,486.4 763.7,486.4 761.6,486.2 759.4,486.0 757.3,485.6 755.1,485.2 752.9,484.8 750.8,484.2 748.6,483.6 746.3,482.9 744.1,482.1 741.9,481.3 739.7,480.4 737.4,479.4 735.1,478.4 732.9,477.4 730.6,476.3 728.3,475.2 726.1,474.0 723.8,472.8 721.5,471.6 719.2,470.3 716.9,469.1 714.6,467.8 712.3,466.5 710.0,465.2 707.7,463.9 705.3,462.7 703.0,461.4 700.7,460.1 698.4,458.9 696.0,457.7 693.7,456.5 691.3,455.3 689.0,454.2 686.6,453.1 684.3,452.1 681.9,451.1 679.6,450.1 677.2,449.2 674.9,448.3 672.5,447.5 670.2,446.6 667.8,445.9 665.4,445.1 663.1,444.4 660.7,443.7 658.4,443.1 656.0,442.5 653.6,441.9 651.3,441.4 648.9,440.9 646.6,440.4 644.2,439.9 641.9,439.5 639.5,439.1 637.1,438.8 634.8,438.4 632.4,438.1 630.1,437.9 627.7,437.6 625.4,437.4 623.0,437.2 620.7,437.0 618.3,436.9 616.0,436.7 613.6,436.6 611.3,436.6 608.9,436.5 606.6,436.5 604.2,436.5 601.9,436.5 599.6,436.5 597.2,436.5 594.9,436.6 592.5,436.7 590.2,436.8 587.9,436.9 585.5,437.0 583.2,437.1 580.9,437.3 578.5,437.5 576.2,437.6 573.9,437.8 571.5,438.1 569.2,438.3 566.9,438.5 564.5,438.8 562.2,439.0 559.9,439.3 557.6,439.6 555.2,439.8 552.9,440.1 550.6,440.4 548.3,440.7 546.0,441.1 543.6,441.4 541.3,441.7 539.0,442.0 536.7,442.4 534.4,442.7 532.1,443.0 529.8,443.4 527.4,443.7 525.1,444.1 522.8,444.4 520.5,444.7 518.2,445.1 515.9,445.4 513.6,445.8 511.3,446.1 509.0,446.5 506.7,446.8 504.4,447.1" fill="#f9cc30"/><polygon points="505.5,454.6 507.8,454.3 510.1,453.9 512.4,453.6 514.7,453.2 517.0,452.9 519.3,452.6 521.6,452.2 523.9,451.9 526.3,451.5 528.6,451.2 530.9,450.8 533.2,450.5 535.5,450.2 537.8,449.8 540.1,449.5 542.4,449.2 544.7,448.8 547.0,448.5 549.3,448.2 551.6,447.9 553.9,447.6 556.2,447.3 558.5,447.1 560.8,446.8 563.1,446.5 565.4,446.3 567.6,446.0 569.9,445.8 572.2,445.6 574.5,445.4 576.8,445.2 579.1,445.0 581.4,444.9 583.7,444.7 586.0,444.6 588.2,444.4 590.5,444.3 592.8,444.2 595.1,444.2 597.4,444.1 599.7,444.1 601.9,444.1 604.2,444.1 606.5,444.1 608.8,444.1 611.1,444.2 613.3,444.2 615.6,444.3 617.9,444.5 620.2,444.6 622.4,444.8 624.7,444.9 627.0,445.2 629.3,445.4 631.5,445.7 633.8,445.9 636.1,446.2 638.3,446.6 640.6,446.9 642.9,447.3 645.2,447.8 647.4,448.2 649.7,448.7 652.0,449.2 654.2,449.7 656.5,450.3 658.8,450.9 661.0,451.5 663.3,452.2 665.6,452.9 667.8,453.6 670.1,454.3 672.4,455.1 674.7,456.0 676.9,456.8 679.2,457.7 681.5,458.7 683.7,459.6 686.0,460.7 688.3,461.7 690.6,462.8 692.9,463.9 695.1,465.1 697.4,466.3 699.7,467.5 702.0,468.7 704.3,470.0 706.6,471.3 708.9,472.6 711.2,473.8 713.5,475.1 715.9,476.4 718.2,477.7 720.5,478.9 722.8,480.2 725.2,481.4 727.5,482.6 729.8,483.7 732.2,484.9 734.5,485.9 736.9,487.0 739.2,488.0 741.6,488.9 744.0,489.8 746.4,490.6 748.7,491.3 751.1,492.0 753.5,492.6 756.0,493.0 758.4,493.4 760.8,493.7 763.3,493.9 765.7,494.0 768.2,494.0 770.7,493.8 773.1,493.6 775.6,493.2 778.0,492.6 780.5,492.0 782.9,491.2 785.4,490.3 787.8,489.2 790.2,488.0 792.6,486.7 795.0,485.2 797.4,483.6 799.8,481.9 802.1,480.0 804.5,478.0 806.8,475.8 809.2,473.5 811.5,471.0 813.8,468.4 816.1,465.7 818.5,462.8 820.8,459.7 823.1,456.5 825.4,453.2 827.7,449.9 830.0,446.5 832.3,443.2 834.6,439.8 836.9,436.6 839.2,433.4 841.5,430.4 843.8,427.5 846.1,424.8 848.4,422.4 850.7,420.2 852.9,418.3 855.1,416.8 857.3,415.5 859.4,414.5 861.5,413.7 863.5,413.2 865.5,412.8 867.4,412.7 869.4,412.7 871.4,412.9 873.4,413.3 875.5,413.9 877.6,414.7 879.7,415.7 881.9,416.9 884.1,418.3 886.3,419.9 888.6,421.7 890.9,423.7 893.1,425.9 895.4,428.3 897.7,430.8 900.0,433.5 902.3,436.4 904.6,439.4 906.9,442.5 909.2,445.6 911.5,448.9 913.8,452.1 916.1,455.4 918.5,458.7 920.8,461.9 923.1,465.0 925.4,468.1 927.7,471.1 930.0,474.0 932.3,476.7 934.7,479.3 937.0,481.7 939.4,483.9 941.8,485.8 944.3,487.5 946.8,489.0 949.4,490.1 952.2,490.8 955.0,491.1 957.8,490.9 960.5,490.2 963.1,489.2 965.7,487.9 968.1,486.3 970.6,484.5 972.9,482.4 975.3,480.2 977.6,477.8 980.0,475.2 982.3,472.5 984.6,469.7 986.9,466.8 989.2,463.8 991.5,460.7 993.8,457.7 996.2,454.6 998.5,451.6 1000.8,448.7 1003.1,445.9 1005.4,443.3 1007.7,440.8 1009.9,438.5 1012.2,436.5 1014.4,434.7 1016.6,433.3 1018.7,432.2 1020.7,431.5 1022.5,431.1 1024.3,430.9 1026.1,431.0 1028.0,431.4 1029.9,432.0 1032.0,432.9 1034.2,434.1 1036.4,435.5 1038.6,437.2 1040.9,439.1 1043.2,441.1 1045.5,443.3 1047.8,445.5 1050.1,447.8 1052.4,450.1 1054.7,452.3 1057.0,454.6 1059.4,456.7 1061.7,458.8 1064.1,460.7 1066.4,462.5 1068.8,464.1 1071.2,465.6 1073.6,467.0 1076.1,468.2 1078.5,469.3 1081.0,470.1 1083.6,470.8 1086.1,471.3 1088.7,471.5 1091.3,471.5 1093.9,471.3 1096.4,470.8 1099.0,470.1 1101.5,469.1 1104.0,468.0 1106.5,466.6 1108.9,465.2 1111.2,463.6 1113.6,462.0 1115.9,460.3 1118.2,458.7 1120.5,457.0 1122.8,455.5 1125.0,454.0 1127.3,452.7 1129.5,451.5 1131.7,450.5 1133.8,449.7 1135.9,449.0 1138.0,448.5 1140.1,448.1 1142.2,447.9 1144.3,447.8 1146.4,447.8 1148.6,447.9 1150.7,448.1 1152.9,448.5 1155.0,448.9 1157.2,449.4 1159.4,450.0 1161.7,450.7 1163.9,451.5 1166.2,452.4 1168.4,453.3 1170.7,454.2 1173.0,455.2 1175.2,456.3 1177.5,457.3 1179.8,458.4 1182.1,459.5 1184.4,460.7 1186.8,461.8 1189.1,462.9 1191.4,463.9 1193.7,465.0 1196.3,459.3 1194.0,458.3 1191.7,457.3 1189.4,456.2 1187.1,455.1 1184.8,454.0 1182.5,452.9 1180.2,451.8 1177.8,450.7 1175.5,449.6 1173.2,448.5 1170.8,447.5 1168.5,446.5 1166.1,445.6 1163.7,444.7 1161.3,443.9 1158.9,443.2 1156.5,442.6 1154.1,442.1 1151.6,441.6 1149.1,441.3 1146.6,441.2 1144.1,441.2 1141.6,441.3 1139.1,441.7 1136.6,442.2 1134.1,442.9 1131.6,443.8 1129.1,444.9 1126.7,446.1 1124.3,447.6 1121.9,449.1 1119.5,450.7 1117.2,452.3 1114.9,454.0 1112.6,455.6 1110.3,457.2 1108.0,458.7 1105.8,460.1 1103.5,461.4 1101.4,462.5 1099.2,463.3 1097.1,464.0 1095.1,464.5 1093.1,464.8 1091.0,464.9 1089.0,464.9 1087.0,464.8 1084.9,464.4 1082.8,464.0 1080.7,463.3 1078.5,462.5 1076.4,461.6 1074.2,460.5 1072.0,459.2 1069.7,457.8 1067.5,456.2 1065.2,454.5 1062.9,452.6 1060.7,450.6 1058.4,448.5 1056.1,446.3 1053.8,444.0 1051.5,441.7 1049.2,439.4 1046.8,437.2 1044.5,435.0 1042.1,432.9 1039.8,431.0 1037.4,429.2 1034.9,427.6 1032.4,426.2 1029.7,425.2 1027.0,424.5 1024.2,424.3 1021.3,424.7 1018.5,425.5 1015.9,426.8 1013.4,428.4 1011.0,430.3 1008.6,432.4 1006.2,434.8 1003.9,437.3 1001.6,440.0 999.2,442.8 996.9,445.7 994.6,448.7 992.3,451.7 990.0,454.8 987.7,457.8 985.4,460.8 983.1,463.8 980.8,466.6 978.5,469.3 976.2,471.8 973.9,474.2 971.6,476.3 969.4,478.3 967.1,480.0 964.9,481.4 962.8,482.6 960.7,483.4 958.7,484.0 956.8,484.4 955.0,484.5 953.2,484.4 951.3,484.0 949.3,483.4 947.3,482.4 945.1,481.1 942.9,479.6 940.7,477.7 938.4,475.6 936.1,473.3 933.8,470.7 931.5,468.0 929.2,465.1 926.9,462.2 924.6,459.1 922.3,455.9 920.0,452.7 917.7,449.4 915.4,446.1 913.1,442.9 910.8,439.6 908.5,436.5 906.2,433.4 903.8,430.4 901.5,427.6 899.2,424.8 896.9,422.3 894.5,419.9 892.2,417.6 889.8,415.5 887.4,413.6 885.0,411.9 882.6,410.4 880.1,409.1 877.6,408.0 875.1,407.1 872.5,406.5 869.8,406.1 867.2,406.1 864.5,406.3 861.9,406.9 859.3,407.8 856.8,408.9 854.3,410.4 851.8,412.1 849.4,414.1 847.0,416.3 844.7,418.8 842.3,421.5 840.0,424.4 837.7,427.4 835.4,430.6 833.1,433.8 830.8,437.2 828.5,440.5 826.1,443.9 823.8,447.2 821.5,450.5 819.2,453.7 816.9,456.8 814.6,459.7 812.3,462.5 810.0,465.1 807.7,467.5 805.5,469.8 803.2,471.9 800.9,473.8 798.6,475.6 796.4,477.3 794.1,478.8 791.9,480.2 789.7,481.4 787.5,482.6 785.3,483.5 783.1,484.4 780.9,485.2 778.7,485.8 776.6,486.3 774.4,486.7 772.3,487.1 770.1,487.3 768.0,487.4 765.8,487.4 763.6,487.4 761.5,487.2 759.3,487.0 757.1,486.6 754.9,486.2 752.7,485.7 750.5,485.1 748.3,484.5 746.0,483.8 743.8,483.0 741.5,482.1 739.3,481.2 737.0,480.3 734.8,479.3 732.5,478.2 730.2,477.1 727.9,476.0 725.6,474.8 723.3,473.6 721.1,472.4 718.8,471.1 716.5,469.9 714.2,468.6 711.8,467.3 709.5,466.0 707.2,464.7 704.9,463.5 702.6,462.2 700.3,460.9 697.9,459.7 695.6,458.5 693.3,457.3 690.9,456.2 688.6,455.1 686.3,454.0 683.9,453.0 681.6,452.0 679.2,451.0 676.9,450.1 674.5,449.2 672.2,448.4 669.8,447.6 667.5,446.8 665.2,446.0 662.8,445.3 660.5,444.7 658.1,444.0 655.8,443.4 653.4,442.9 651.1,442.3 648.7,441.8 646.4,441.4 644.0,440.9 641.7,440.5 639.4,440.1 637.0,439.8 634.7,439.4 632.3,439.1 630.0,438.9 627.6,438.6 625.3,438.4 622.9,438.2 620.6,438.0 618.3,437.9 615.9,437.7 613.6,437.6 611.3,437.6 608.9,437.5 606.6,437.5 604.2,437.5 601.9,437.5 599.6,437.5 597.2,437.5 594.9,437.6 592.6,437.7 590.2,437.7 587.9,437.9 585.6,438.0 583.3,438.1 580.9,438.3 578.6,438.5 576.3,438.6 573.9,438.8 571.6,439.1 569.3,439.3 567.0,439.5 564.6,439.8 562.3,440.0 560.0,440.3 557.7,440.5 555.4,440.8 553.0,441.1 550.7,441.4 548.4,441.7 546.1,442.0 543.8,442.4 541.5,442.7 539.2,443.0 536.8,443.3 534.5,443.7 532.2,444.0 529.9,444.4 527.6,444.7 525.3,445.0 523.0,445.4 520.7,445.7 518.4,446.1 516.1,446.4 513.7,446.8 511.4,447.1 509.1,447.4 506.8,447.8 504.5,448.1" fill="#f6e21e"/><polygon points="505.3,453.6 507.6,453.3 509.9,452.9 512.3,452.6 514.6,452.3 516.9,451.9 519.2,451.6 521.5,451.2 523.8,450.9 526.1,450.5 528.4,450.2 530.7,449.8 533.0,449.5 535.3,449.2 537.6,448.8 539.9,448.5 542.2,448.2 544.5,447.9 546.8,447.5 549.1,447.2 551.4,446.9 553.7,446.6 556.0,446.4 558.3,446.1 560.6,445.8 562.9,445.5 565.2,445.3 567.5,445.1 569.8,444.8 572.1,444.6 574.4,444.4 576.7,444.2 579.0,444.0 581.3,443.9 583.6,443.7 585.9,443.6 588.2,443.4 590.5,443.3 592.8,443.2 595.1,443.2 597.4,443.1 599.6,443.1 601.9,443.1 604.2,443.1 606.5,443.1 608.8,443.1 611.1,443.2 613.4,443.2 615.7,443.3 617.9,443.5 620.2,443.6 622.5,443.8 624.8,444.0 627.1,444.2 629.4,444.4 631.6,444.7 633.9,445.0 636.2,445.3 638.5,445.6 640.8,446.0 643.1,446.4 645.3,446.8 647.6,447.2 649.9,447.7 652.2,448.2 654.5,448.8 656.7,449.3 659.0,449.9 661.3,450.6 663.6,451.2 665.9,451.9 668.1,452.7 670.4,453.4 672.7,454.2 675.0,455.1 677.3,456.0 679.6,456.9 681.8,457.8 684.1,458.8 686.4,459.8 688.7,460.9 691.0,462.0 693.3,463.1 695.6,464.3 697.9,465.5 700.2,466.7 702.5,467.9 704.8,469.2 707.1,470.5 709.4,471.8 711.7,473.0 714.0,474.3 716.3,475.6 718.6,476.9 720.9,478.1 723.3,479.4 725.6,480.6 727.9,481.8 730.2,482.9 732.6,484.0 734.9,485.1 737.2,486.1 739.6,487.1 741.9,488.0 744.3,488.9 746.6,489.7 749.0,490.4 751.4,491.0 753.8,491.6 756.1,492.1 758.5,492.5 760.9,492.8 763.3,492.9 765.7,493.0 768.2,493.0 770.6,492.8 773.0,492.6 775.4,492.2 777.8,491.7 780.2,491.0 782.6,490.3 785.0,489.4 787.4,488.3 789.8,487.2 792.2,485.9 794.5,484.5 796.9,482.9 799.3,481.2 801.6,479.3 803.9,477.3 806.3,475.2 808.6,472.9 810.9,470.5 813.2,467.9 815.6,465.2 817.9,462.3 820.2,459.3 822.5,456.1 824.8,452.8 827.1,449.5 829.4,446.1 831.7,442.8 834.0,439.4 836.3,436.2 838.7,433.0 841.0,429.9 843.3,427.0 845.6,424.3 847.8,421.8 850.1,419.6 852.4,417.7 854.6,416.1 856.8,414.7 859.0,413.6 861.1,412.8 863.2,412.2 865.3,411.8 867.4,411.7 869.5,411.7 871.5,411.9 873.7,412.4 875.8,413.0 878.0,413.8 880.1,414.9 882.4,416.1 884.6,417.6 886.9,419.2 889.1,421.1 891.4,423.1 893.7,425.3 896.0,427.7 898.3,430.3 900.6,433.0 902.9,435.9 905.2,438.9 907.5,442.0 909.8,445.2 912.1,448.4 914.4,451.7 916.7,455.0 919.0,458.2 921.3,461.4 923.7,464.6 926.0,467.7 928.3,470.6 930.6,473.5 932.9,476.2 935.2,478.7 937.6,481.1 939.9,483.2 942.3,485.1 944.7,486.8 947.2,488.1 949.7,489.2 952.3,489.9 955.0,490.1 957.6,489.9 960.2,489.3 962.8,488.3 965.2,487.1 967.6,485.6 970.0,483.8 972.4,481.8 974.7,479.6 977.1,477.3 979.4,474.7 981.7,472.1 984.0,469.2 986.3,466.3 988.6,463.3 991.0,460.3 993.3,457.2 995.6,454.2 997.9,451.2 1000.2,448.3 1002.5,445.4 1004.8,442.8 1007.1,440.3 1009.4,437.9 1011.6,435.9 1013.9,434.1 1016.1,432.6 1018.3,431.4 1020.4,430.6 1022.4,430.1 1024.3,429.9 1026.2,430.0 1028.2,430.4 1030.3,431.1 1032.5,432.1 1034.7,433.3 1036.9,434.8 1039.2,436.6 1041.4,438.5 1043.7,440.5 1046.0,442.7 1048.3,444.9 1050.6,447.2 1052.9,449.5 1055.3,451.8 1057.6,454.0 1059.9,456.1 1062.2,458.1 1064.6,460.0 1066.9,461.8 1069.3,463.4 1071.7,464.9 1074.0,466.2 1076.4,467.4 1078.9,468.4 1081.3,469.2 1083.8,469.8 1086.2,470.3 1088.7,470.5 1091.2,470.5 1093.7,470.3 1096.2,469.9 1098.7,469.2 1101.2,468.3 1103.6,467.1 1106.0,465.8 1108.4,464.4 1110.7,462.9 1113.1,461.3 1115.4,459.6 1117.7,458.0 1120.0,456.3 1122.3,454.7 1124.6,453.3 1126.8,451.9 1129.1,450.7 1131.3,449.6 1133.5,448.8 1135.6,448.1 1137.8,447.5 1140.0,447.2 1142.1,446.9 1144.3,446.8 1146.5,446.8 1148.6,446.9 1150.8,447.2 1153.0,447.5 1155.3,447.9 1157.5,448.5 1159.7,449.1 1162.0,449.8 1164.2,450.6 1166.5,451.5 1168.8,452.4 1171.1,453.4 1173.3,454.4 1175.6,455.4 1177.9,456.5 1180.2,457.6 1182.5,458.7 1184.8,459.8 1187.2,460.9 1189.5,462.0 1191.8,463.1 1194.1,464.1 1195.9,460.2 1193.6,459.2 1191.3,458.1 1189.0,457.0 1186.7,456.0 1184.4,454.8 1182.1,453.7 1179.8,452.6 1177.4,451.5 1175.1,450.5 1172.8,449.4 1170.5,448.4 1168.1,447.4 1165.8,446.5 1163.4,445.6 1161.0,444.9 1158.7,444.2 1156.3,443.5 1153.9,443.0 1151.5,442.6 1149.0,442.3 1146.6,442.2 1144.2,442.2 1141.7,442.3 1139.3,442.6 1136.8,443.1 1134.4,443.8 1131.9,444.7 1129.5,445.7 1127.1,446.9 1124.7,448.3 1122.4,449.8 1120.0,451.4 1117.7,453.0 1115.4,454.7 1113.1,456.3 1110.8,457.9 1108.5,459.5 1106.2,460.9 1104.0,462.2 1101.8,463.3 1099.6,464.2 1097.4,464.9 1095.3,465.4 1093.2,465.8 1091.1,465.9 1089.0,465.9 1086.8,465.7 1084.7,465.4 1082.5,464.9 1080.4,464.2 1078.2,463.4 1076.0,462.4 1073.7,461.2 1071.5,459.9 1069.2,458.5 1067.0,456.9 1064.7,455.1 1062.4,453.2 1060.1,451.2 1057.8,449.1 1055.5,446.9 1053.2,444.6 1050.9,442.3 1048.6,440.0 1046.3,437.8 1043.9,435.6 1041.6,433.6 1039.3,431.7 1036.9,429.9 1034.5,428.4 1032.0,427.1 1029.5,426.1 1026.9,425.5 1024.2,425.3 1021.5,425.6 1018.9,426.4 1016.3,427.6 1013.9,429.2 1011.5,431.0 1009.1,433.0 1006.8,435.3 1004.5,437.8 1002.1,440.5 999.8,443.2 997.5,446.1 995.2,449.1 992.9,452.2 990.6,455.2 988.3,458.3 986.0,461.3 983.7,464.2 981.4,467.1 979.1,469.8 976.8,472.3 974.5,474.7 972.2,476.9 969.9,478.9 967.7,480.6 965.4,482.1 963.2,483.4 961.1,484.3 959.0,485.0 957.0,485.4 955.0,485.5 953.0,485.4 951.0,484.9 949.0,484.2 946.8,483.2 944.6,481.8 942.4,480.2 940.1,478.3 937.8,476.2 935.5,473.8 933.3,471.2 931.0,468.5 928.6,465.6 926.3,462.6 924.0,459.5 921.7,456.3 919.4,453.1 917.1,449.8 914.8,446.5 912.5,443.3 910.2,440.1 907.9,436.9 905.6,433.8 903.3,430.9 900.9,428.0 898.6,425.4 896.3,422.8 894.0,420.4 891.6,418.2 889.3,416.2 886.9,414.3 884.6,412.7 882.2,411.2 879.7,409.9 877.3,408.9 874.8,408.0 872.3,407.5 869.8,407.1 867.2,407.1 864.7,407.3 862.1,407.8 859.6,408.7 857.2,409.8 854.7,411.1 852.3,412.8 849.9,414.7 847.6,416.9 845.2,419.3 842.9,422.0 840.6,424.9 838.3,427.9 836.0,431.0 833.7,434.2 831.3,437.6 829.0,440.9 826.7,444.3 824.4,447.6 822.1,450.9 819.8,454.1 817.5,457.2 815.2,460.2 812.9,463.0 810.6,465.6 808.3,468.0 806.0,470.3 803.7,472.5 801.4,474.5 799.2,476.3 796.9,478.0 794.6,479.5 792.4,481.0 790.1,482.2 787.9,483.4 785.7,484.4 783.4,485.3 781.2,486.1 779.0,486.7 776.8,487.3 774.6,487.7 772.4,488.0 770.2,488.3 768.0,488.4 765.8,488.4 763.6,488.4 761.4,488.2 759.2,487.9 756.9,487.6 754.7,487.2 752.5,486.7 750.2,486.1 748.0,485.4 745.7,484.7 743.5,483.9 741.2,483.0 738.9,482.1 736.6,481.1 734.4,480.1 732.1,479.0 729.8,477.9 727.5,476.8 725.2,475.6 722.9,474.4 720.6,473.2 718.3,471.9 716.0,470.7 713.7,469.4 711.4,468.1 709.1,466.8 706.8,465.5 704.5,464.3 702.2,463.0 699.8,461.7 697.5,460.5 695.2,459.3 692.9,458.1 690.5,457.0 688.2,455.9 685.9,454.8 683.5,453.8 681.2,452.8 678.9,451.9 676.5,451.0 674.2,450.1 671.9,449.3 669.5,448.5 667.2,447.7 664.9,447.0 662.5,446.3 660.2,445.6 657.9,445.0 655.5,444.4 653.2,443.8 650.9,443.3 648.5,442.8 646.2,442.3 643.9,441.9 641.5,441.5 639.2,441.1 636.9,440.7 634.5,440.4 632.2,440.1 629.9,439.8 627.5,439.6 625.2,439.4 622.9,439.2 620.5,439.0 618.2,438.9 615.9,438.7 613.6,438.6 611.2,438.6 608.9,438.5 606.6,438.5 604.2,438.5 601.9,438.5 599.6,438.5 597.3,438.5 594.9,438.6 592.6,438.7 590.3,438.7 588.0,438.9 585.6,439.0 583.3,439.1 581.0,439.3 578.7,439.5 576.4,439.6 574.0,439.8 571.7,440.0 569.4,440.3 567.1,440.5 564.8,440.7 562.4,441.0 560.1,441.3 557.8,441.5 555.5,441.8 553.2,442.1 550.9,442.4 548.5,442.7 546.2,443.0 543.9,443.3 541.6,443.7 539.3,444.0 537.0,444.3 534.7,444.7 532.4,445.0 530.1,445.3 527.7,445.7 525.4,446.0 523.1,446.4 520.8,446.7 518.5,447.1 516.2,447.4 513.9,447.7 511.6,448.1 509.3,448.4 507.0,448.8 504.7,449.1" fill="#f9f50f"/><ellipse cx="589.6" cy="486.2" rx="17.5" ry="9" fill="url(#blob)"/><ellipse cx="688.0" cy="398.5" rx="17.5" ry="9" fill="url(#blob)"/><ellipse cx="852.0" cy="486.2" rx="17.5" ry="9" fill="url(#blob)"/><ellipse cx="1098.0" cy="420.4" rx="17.5" ry="9" fill="url(#blob)"/></g><path d="M518 398.5H522" stroke="#222" stroke-width="1"/><path d="M518 442.3H522" stroke="#222" stroke-width="1"/><path d="M518 486.2H522" stroke="#222" stroke-width="1"/><path d="M518 530H522" stroke="#222" stroke-width="1"/><path d="M523.5 531V534.5" stroke="#222" stroke-width="1"/><path d="M588.5 531V534.5" stroke="#222" stroke-width="1"/><path d="M654.5 531V534.5" stroke="#222" stroke-width="1"/><path d="M719.5 531V534.5" stroke="#222" stroke-width="1"/><path d="M785.5 531V534.5" stroke="#222" stroke-width="1"/><path d="M851.5 531V534.5" stroke="#222" stroke-width="1"/><path d="M916.5 531V534.5" stroke="#222" stroke-width="1"/><path d="M982.5 531V534.5" stroke="#222" stroke-width="1"/><path d="M1047.5 531V534.5" stroke="#222" stroke-width="1"/><path d="M1113.5 531V534.5" stroke="#222" stroke-width="1"/><path d="M1178.5 531V534.5" stroke="#222" stroke-width="1"/></svg>
<div class="t" style="left:510.94px;top:393.14px;font-size:10px;color:#262626;">6</div>
<div class="t" style="left:510.94px;top:437.14px;font-size:10px;color:#262626;">4</div>
<div class="t" style="left:510.94px;top:481.14px;font-size:10px;color:#262626;">2</div>
<div class="t" style="left:510.94px;top:524.63px;font-size:10px;color:#262626;">0</div>
<div class="t" style="left:520.72px;top:534.53px;font-size:10px;color:#262626;">0</div>
<div class="t" style="left:581.55px;top:534.53px;font-size:10px;color:#262626;">0.2</div>
<div class="t" style="left:647.55px;top:534.53px;font-size:10px;color:#262626;">0.4</div>
<div class="t" style="left:712.55px;top:534.53px;font-size:10px;color:#262626;">0.6</div>
<div class="t" style="left:778.55px;top:534.53px;font-size:10px;color:#262626;">0.8</div>
<div class="t" style="left:844.55px;top:534.53px;font-size:10px;color:#262626;">1.0</div>
<div class="t" style="left:909.55px;top:534.53px;font-size:10px;color:#262626;">1.2</div>
<div class="t" style="left:975.55px;top:534.53px;font-size:10px;color:#262626;">1.4</div>
<div class="t" style="left:1040.55px;top:534.53px;font-size:10px;color:#262626;">1.6</div>
<div class="t" style="left:1106.55px;top:534.53px;font-size:10px;color:#262626;">1.8</div>
<div class="t" style="left:1170.05px;top:534.53px;font-size:10px;color:#262626;">2.0</div>
<div class="t" style="left:828.90px;top:557.13px;font-size:10px;color:#262626;transform:scaleX(0.9978);transform-origin:0 0;">Time (s)</div>
<div class="t" style="left:453px;top:446.5px;width:73px;font-size:10px;color:#262626;transform:rotate(-90deg);transform-origin:36.5px 6px;text-align:center">Frequency (kHz)</div>
<svg style="left:0;top:0" width="1202" height="799" viewBox="0 0 1202 799"><rect x="523" y="575" width="656" height="174" fill="#ffffff"/><rect x="508" y="575" width="671" height="12" fill="#575757"/><rect x="508" y="623" width="671" height="12" fill="#575757"/><rect x="516" y="575" width="7" height="174" fill="#8a8a8a"/><rect x="516" y="575" width="7" height="12" fill="#383838"/><rect x="516" y="623" width="7" height="12" fill="#383838"/><path d="M588.5 575V749" stroke="#cfcfcf" stroke-width="1"/><path d="M588.5 575V587M588.5 623V635" stroke="#3e3e3e" stroke-width="1"/><path d="M654.5 575V749" stroke="#cfcfcf" stroke-width="1"/><path d="M654.5 575V587M654.5 623V635" stroke="#3e3e3e" stroke-width="1"/><path d="M719.5 575V749" stroke="#cfcfcf" stroke-width="1"/><path d="M719.5 575V587M719.5 623V635" stroke="#3e3e3e" stroke-width="1"/><path d="M785.5 575V749" stroke="#cfcfcf" stroke-width="1"/><path d="M785.5 575V587M785.5 623V635" stroke="#3e3e3e" stroke-width="1"/><path d="M851.5 575V749" stroke="#cfcfcf" stroke-width="1"/><path d="M851.5 575V587M851.5 623V635" stroke="#3e3e3e" stroke-width="1"/><path d="M916.5 575V749" stroke="#cfcfcf" stroke-width="1"/><path d="M916.5 575V587M916.5 623V635" stroke="#3e3e3e" stroke-width="1"/><path d="M982.5 575V749" stroke="#cfcfcf" stroke-width="1"/><path d="M982.5 575V587M982.5 623V635" stroke="#3e3e3e" stroke-width="1"/><path d="M1047.5 575V749" stroke="#cfcfcf" stroke-width="1"/><path d="M1047.5 575V587M1047.5 623V635" stroke="#3e3e3e" stroke-width="1"/><path d="M1113.5 575V749" stroke="#cfcfcf" stroke-width="1"/><path d="M1113.5 575V587M1113.5 623V635" stroke="#3e3e3e" stroke-width="1"/><rect x="525" y="599" width="654" height="12" fill="#f7f7f7"/><rect x="525" y="647" width="654" height="12" fill="#f7f7f7"/><path d="M523.5 575V749.5H1179.5V575" fill="none" stroke="#111" stroke-width="1.2"/><path d="M523.5 749V752.5" stroke="#111" stroke-width="1"/><path d="M588.5 749V752.5" stroke="#111" stroke-width="1"/><path d="M654.5 749V752.5" stroke="#111" stroke-width="1"/><path d="M719.5 749V752.5" stroke="#111" stroke-width="1"/><path d="M785.5 749V752.5" stroke="#111" stroke-width="1"/><path d="M851.5 749V752.5" stroke="#111" stroke-width="1"/><path d="M916.5 749V752.5" stroke="#111" stroke-width="1"/><path d="M982.5 749V752.5" stroke="#111" stroke-width="1"/><path d="M1047.5 749V752.5" stroke="#111" stroke-width="1"/><path d="M1113.5 749V752.5" stroke="#111" stroke-width="1"/><path d="M1178.5 749V752.5" stroke="#111" stroke-width="1"/><path d="M864.0 610.5L869.0 600.2L874.0 610.5Z" fill="none" stroke="#2a7fc5" stroke-width="1.15" stroke-linejoin="miter"/><path d="M948.0 610.5L953.0 600.2L958.0 610.5Z" fill="none" stroke="#2a7fc5" stroke-width="1.15" stroke-linejoin="miter"/><path d="M1018.0 610.5L1023.0 600.2L1028.0 610.5Z" fill="none" stroke="#2a7fc5" stroke-width="1.15" stroke-linejoin="miter"/><path d="M1082.0 610.5L1087.0 600.2L1092.0 610.5Z" fill="none" stroke="#2a7fc5" stroke-width="1.15" stroke-linejoin="miter"/><path d="M1136.0 610.5L1141.0 600.2L1146.0 610.5Z" fill="none" stroke="#2a7fc5" stroke-width="1.15" stroke-linejoin="miter"/><path d="M757.0 610.5L762.0 600.2L767.0 610.5Z" fill="none" stroke="#2a7fc5" stroke-width="1.15" stroke-linejoin="miter"/><path d="M630.0 610.5L635.0 600.2L640.0 610.5Z" fill="none" stroke="#2a7fc5" stroke-width="1.15" stroke-linejoin="miter"/><rect x="571.5" y="646.5" width="37.0" height="13" fill="#fff" stroke="#a8cdec" stroke-width="1"/><rect x="573.2" y="648" width="33.6" height="10" fill="#2e89ca"/><rect x="669.5" y="646.5" width="36.0" height="13" fill="#fff" stroke="#a8cdec" stroke-width="1"/><rect x="671.2" y="648" width="32.6" height="10" fill="#2e89ca"/><rect x="832.5" y="646.5" width="38.9" height="13" fill="#fff" stroke="#a8cdec" stroke-width="1"/><rect x="834.2" y="648" width="35.5" height="10" fill="#2e89ca"/><rect x="1079.5" y="646.5" width="35.0" height="13" fill="#fff" stroke="#a8cdec" stroke-width="1"/><rect x="1081.2" y="648" width="31.6" height="10" fill="#2e89ca"/></svg>
<div class="t" style="left:516.00px;top:575.53px;font-size:10px;color:#ffffff;font-weight:bold;transform:scaleX(0.9445);transform-origin:0 0;">Fextrema</div>
<div class="t" style="left:516.00px;top:623.74px;font-size:10px;color:#ffffff;font-weight:bold;transform:scaleX(0.9394);transform-origin:0 0;">Atom</div>
<div class="t" style="left:868.60px;top:612.43px;font-size:10px;color:#2a7fc5;transform:scaleX(0.9922);transform-origin:0 0;">true</div>
<div class="t" style="left:952.60px;top:612.43px;font-size:10px;color:#2a7fc5;transform:scaleX(0.9922);transform-origin:0 0;">true</div>
<div class="t" style="left:1022.60px;top:612.43px;font-size:10px;color:#2a7fc5;transform:scaleX(0.9922);transform-origin:0 0;">true</div>
<div class="t" style="left:1086.60px;top:612.43px;font-size:10px;color:#2a7fc5;transform:scaleX(0.9922);transform-origin:0 0;">true</div>
<div class="t" style="left:1140.60px;top:612.43px;font-size:10px;color:#2a7fc5;transform:scaleX(0.9922);transform-origin:0 0;">true</div>
<div class="t" style="left:761.60px;top:612.43px;font-size:10px;color:#2a7fc5;transform:scaleX(0.9922);transform-origin:0 0;">true</div>
<div class="t" style="left:634.60px;top:612.43px;font-size:10px;color:#2a7fc5;transform:scaleX(0.9922);transform-origin:0 0;">true</div>
<div class="t" style="left:572.20px;top:660.13px;font-size:10px;color:#2a7fc5;">1</div>
<div class="t" style="left:670.20px;top:660.13px;font-size:10px;color:#2a7fc5;">2</div>
<div class="t" style="left:833.20px;top:660.13px;font-size:10px;color:#2a7fc5;">3</div>
<div class="t" style="left:1080.20px;top:660.13px;font-size:10px;color:#2a7fc5;">4</div>
<div class="t" style="left:520.72px;top:753.53px;font-size:10px;color:#262626;">0</div>
<div class="t" style="left:581.55px;top:753.53px;font-size:10px;color:#262626;">0.2</div>
<div class="t" style="left:647.55px;top:753.53px;font-size:10px;color:#262626;">0.4</div>
<div class="t" style="left:712.55px;top:753.53px;font-size:10px;color:#262626;">0.6</div>
<div class="t" style="left:778.55px;top:753.53px;font-size:10px;color:#262626;">0.8</div>
<div class="t" style="left:844.55px;top:753.53px;font-size:10px;color:#262626;">1.0</div>
<div class="t" style="left:909.55px;top:753.53px;font-size:10px;color:#262626;">1.2</div>
<div class="t" style="left:975.55px;top:753.53px;font-size:10px;color:#262626;">1.4</div>
<div class="t" style="left:1040.55px;top:753.53px;font-size:10px;color:#262626;">1.6</div>
<div class="t" style="left:1106.55px;top:753.53px;font-size:10px;color:#262626;">1.8</div>
<div class="t" style="left:1170.05px;top:753.53px;font-size:10px;color:#262626;">2.0</div>
<div class="t" style="left:828.90px;top:775.53px;font-size:10px;color:#262626;transform:scaleX(0.9978);transform-origin:0 0;">Time (s)</div>
</body></html>
